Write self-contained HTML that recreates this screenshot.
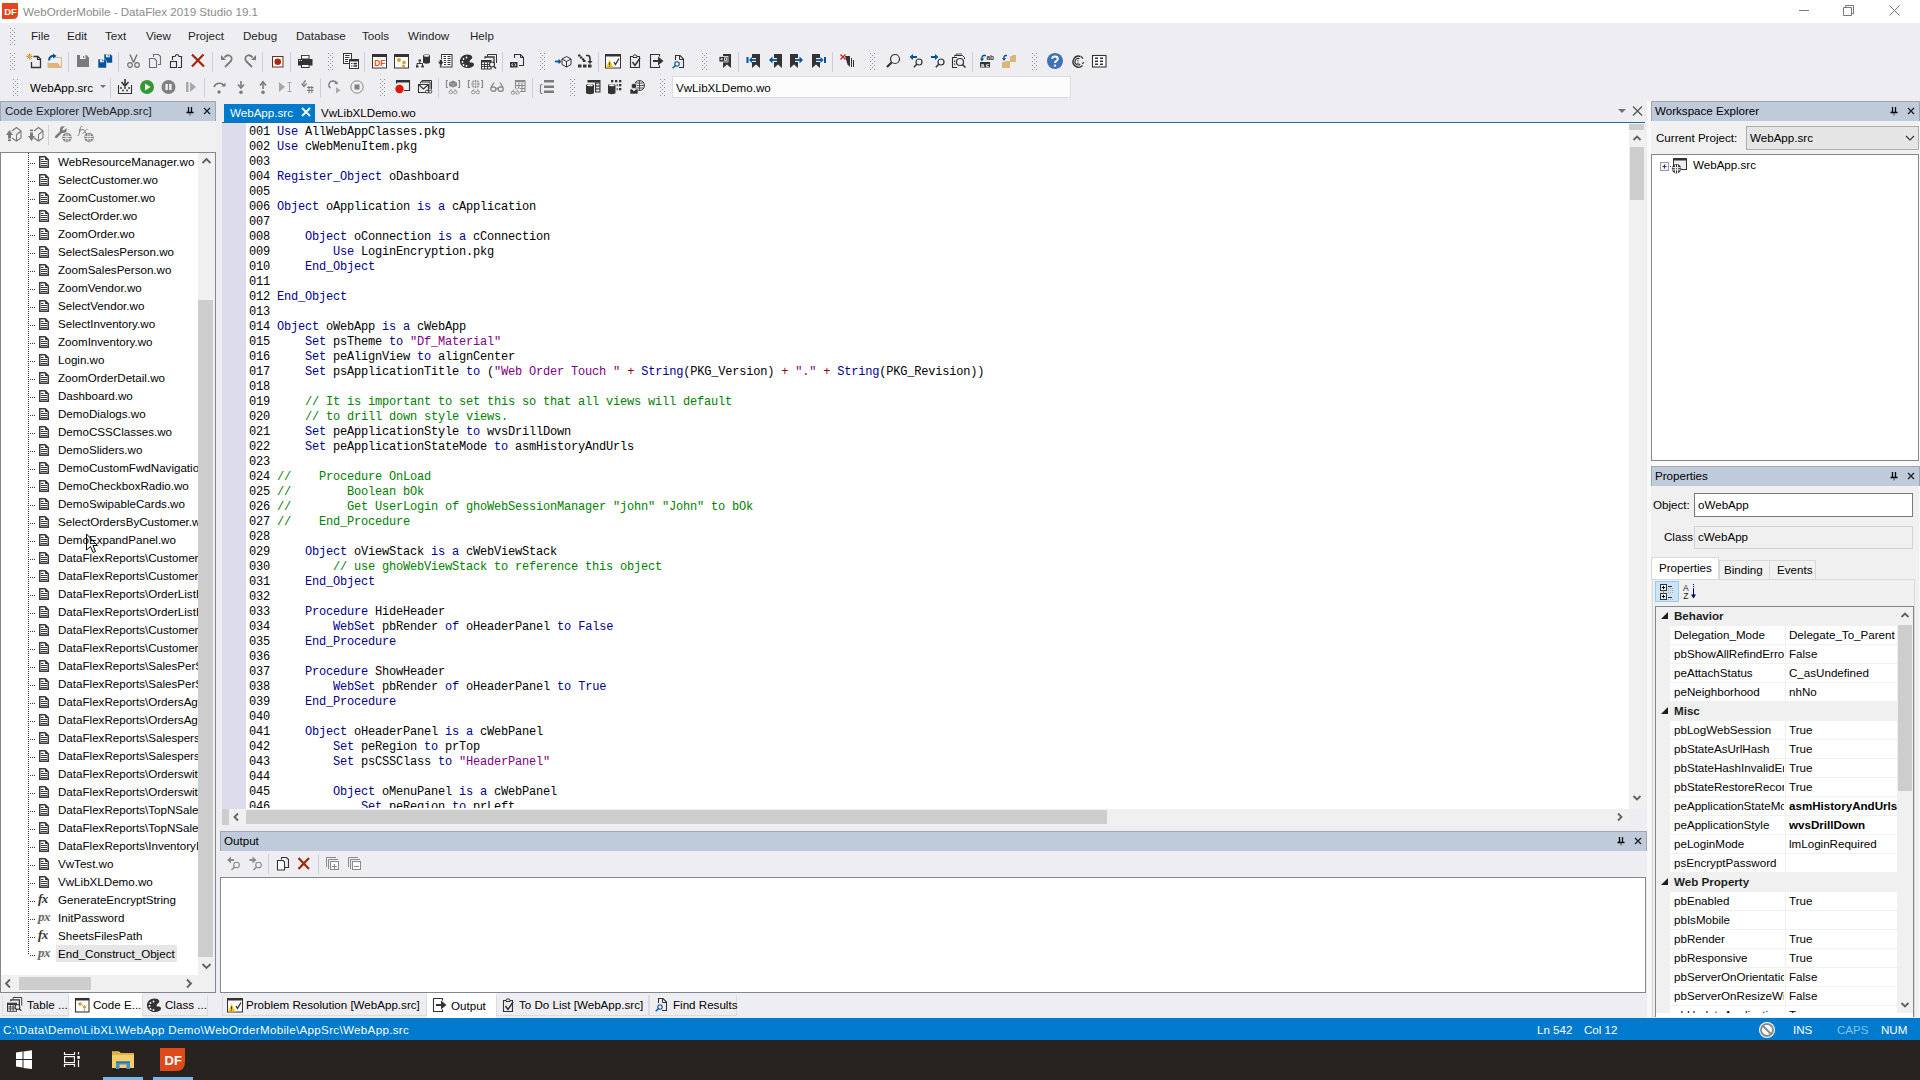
<!DOCTYPE html><html><head><meta charset="utf-8"><style>
*{margin:0;padding:0;box-sizing:border-box}
html,body{width:1920px;height:1080px;overflow:hidden;background:#eeeef2;font-family:"Liberation Sans",sans-serif;font-size:11.6px;color:#000}
div{position:absolute}
.t{white-space:nowrap;line-height:14px}
.code{font-family:"Liberation Mono",monospace;font-size:12px;letter-spacing:-0.2px;line-height:15px;white-space:pre;color:#000}
.k{color:#00008b}
.s{color:#800080}
.c{color:#008000}
.o{color:#8b0000}
.grip{background-image:radial-gradient(circle,#9a9aa0 0.8px,transparent 1px);background-size:4px 4px}
.sep{background:#cccedb}
</style></head><body>
<div style="left:0px;top:0px;width:1920px;height:23px;background:#fff"></div>
<svg style="position:absolute;left:2px;top:3px;" width="16" height="16" viewBox="0 0 16 16"><path d="M0 0H16V11Q16 16 11 16H0Z" fill="#e2461b"/><text x="2.2" y="11.8" font-family="Liberation Sans" font-weight="bold" font-size="9.5" fill="#fff">DF</text></svg>
<div class="t" style="left:23px;top:5px;color:#8b8b8b;font-size:11.6px">WebOrderMobile - DataFlex 2019 Studio 19.1</div>
<svg style="position:absolute;left:1799px;top:6px;" width="14" height="10" viewBox="0 0 14 10"><path d="M0 4.5H10" stroke="#777" stroke-width="1"/></svg>
<svg style="position:absolute;left:1843px;top:5px;" width="12" height="12" viewBox="0 0 12 12"><path d="M0.5 2.5H8.5V10.5H0.5Z M2.5 2.5V0.5H10.5V8.5H8.5" fill="none" stroke="#777" stroke-width="1"/></svg>
<svg style="position:absolute;left:1889px;top:5px;" width="12" height="12" viewBox="0 0 12 12"><path d="M0.5 0.5L10.5 10.5M10.5 0.5L0.5 10.5" stroke="#777" stroke-width="1"/></svg>
<div class="t" style="left:31px;top:29px;color:#1e1e1e">File</div>
<div class="t" style="left:67px;top:29px;color:#1e1e1e">Edit</div>
<div class="t" style="left:105px;top:29px;color:#1e1e1e">Text</div>
<div class="t" style="left:146px;top:29px;color:#1e1e1e">View</div>
<div class="t" style="left:188px;top:29px;color:#1e1e1e">Project</div>
<div class="t" style="left:243px;top:29px;color:#1e1e1e">Debug</div>
<div class="t" style="left:296px;top:29px;color:#1e1e1e">Database</div>
<div class="t" style="left:362px;top:29px;color:#1e1e1e">Tools</div>
<div class="t" style="left:408px;top:29px;color:#1e1e1e">Window</div>
<div class="t" style="left:470px;top:29px;color:#1e1e1e">Help</div>

<div class="t" style="left:30px;top:81px;">WebApp.src</div>
<div style="left:672px;top:76px;width:399px;height:22px;background:#fcfcfc;border:1px solid #dcdce0"></div>
<div class="t" style="left:676px;top:81px;">VwLibXLDemo.wo</div>
<div style="left:0px;top:121px;width:216px;height:872px;background:#f0f0f0"></div>
<div style="left:0px;top:101px;width:216px;height:20px;background:#bfcbda;border:1px solid #a2a6ab;border-bottom:none"></div>
<div class="t" style="left:5px;top:104px;color:#1e1e1e">Code Explorer [WebApp.src]</div>
<svg style="position:absolute;left:186px;top:106px;" width="8" height="10" viewBox="0 0 8 10"><path d="M2.5 1V6.5M5.5 1V6.5M0.5 6.5H7.5" stroke="#000" stroke-width="1.3" fill="none"/><path d="M4 7V9.5" stroke="#555" stroke-width="1.2"/></svg>
<svg style="position:absolute;left:203px;top:107px;" width="8" height="8" viewBox="0 0 8 8"><path d="M1 1L7 7M7 1L1 7" stroke="#1e1e1e" stroke-width="1.3"/></svg>
<div style="left:0px;top:152px;width:216px;height:841px;background:#fff;border:1px solid #828790"></div>
<div style="left:198px;top:153px;width:17px;height:822px;background:#f0f0f0"></div>
<div style="left:198px;top:300px;width:15px;height:657px;background:#cdcdcd"></div>
<svg style="position:absolute;left:201px;top:156px;" width="11" height="10" viewBox="0 0 11 10"><path d="M1.5 7L5.5 3L9.5 7" stroke="#606060" stroke-width="1.8" fill="none"/></svg>
<svg style="position:absolute;left:201px;top:961px;" width="11" height="10" viewBox="0 0 11 10"><path d="M1.5 3L5.5 7L9.5 3" stroke="#606060" stroke-width="1.8" fill="none"/></svg>
<div style="left:1px;top:975px;width:197px;height:17px;background:#f0f0f0"></div>
<div style="left:19px;top:977px;width:72px;height:13px;background:#cdcdcd"></div>
<svg style="position:absolute;left:3px;top:978px;" width="10" height="11" viewBox="0 0 10 11"><path d="M7 1.5L3 5.5L7 9.5" stroke="#606060" stroke-width="1.8" fill="none"/></svg>
<svg style="position:absolute;left:184px;top:978px;" width="10" height="11" viewBox="0 0 10 11"><path d="M3 1.5L7 5.5L3 9.5" stroke="#606060" stroke-width="1.8" fill="none"/></svg>
<div style="left:198px;top:975px;width:17px;height:17px;background:#f0f0f0"></div>
<div style="left:1px;top:153px;width:197px;height:822px;overflow:hidden"><div style="left:27px;top:0;width:1px;height:802px;background-image:linear-gradient(#333 50%,transparent 50%);background-size:1px 2px"></div><div style="left:29px;top:10px;width:6px;height:1px;background-image:linear-gradient(90deg,#333 50%,transparent 50%);background-size:2px 1px"></div><svg style="position:absolute;left:38px;top:3px" width="10" height="12" viewBox="0 0 10 12"><path d="M0.75 0.75H6.3L9.25 3.7V11.25H0.75Z" fill="#fff" stroke="#3a3a3a" stroke-width="1.5"/><path d="M6 0.5L9.5 4H6Z" fill="#3a3a3a"/><path d="M2 3.5H4.5M2 5.5H8M2 7.5H8M2 9.5H8" stroke="#3a3a3a" stroke-width="1"/></svg><div class="t" style="left:55px;top:2px;padding:0 2px">WebResourceManager.wo</div><div style="left:29px;top:28px;width:6px;height:1px;background-image:linear-gradient(90deg,#333 50%,transparent 50%);background-size:2px 1px"></div><svg style="position:absolute;left:38px;top:21px" width="10" height="12" viewBox="0 0 10 12"><path d="M0.75 0.75H6.3L9.25 3.7V11.25H0.75Z" fill="#fff" stroke="#3a3a3a" stroke-width="1.5"/><path d="M6 0.5L9.5 4H6Z" fill="#3a3a3a"/><path d="M2 3.5H4.5M2 5.5H8M2 7.5H8M2 9.5H8" stroke="#3a3a3a" stroke-width="1"/></svg><div class="t" style="left:55px;top:20px;padding:0 2px">SelectCustomer.wo</div><div style="left:29px;top:46px;width:6px;height:1px;background-image:linear-gradient(90deg,#333 50%,transparent 50%);background-size:2px 1px"></div><svg style="position:absolute;left:38px;top:39px" width="10" height="12" viewBox="0 0 10 12"><path d="M0.75 0.75H6.3L9.25 3.7V11.25H0.75Z" fill="#fff" stroke="#3a3a3a" stroke-width="1.5"/><path d="M6 0.5L9.5 4H6Z" fill="#3a3a3a"/><path d="M2 3.5H4.5M2 5.5H8M2 7.5H8M2 9.5H8" stroke="#3a3a3a" stroke-width="1"/></svg><div class="t" style="left:55px;top:38px;padding:0 2px">ZoomCustomer.wo</div><div style="left:29px;top:64px;width:6px;height:1px;background-image:linear-gradient(90deg,#333 50%,transparent 50%);background-size:2px 1px"></div><svg style="position:absolute;left:38px;top:57px" width="10" height="12" viewBox="0 0 10 12"><path d="M0.75 0.75H6.3L9.25 3.7V11.25H0.75Z" fill="#fff" stroke="#3a3a3a" stroke-width="1.5"/><path d="M6 0.5L9.5 4H6Z" fill="#3a3a3a"/><path d="M2 3.5H4.5M2 5.5H8M2 7.5H8M2 9.5H8" stroke="#3a3a3a" stroke-width="1"/></svg><div class="t" style="left:55px;top:56px;padding:0 2px">SelectOrder.wo</div><div style="left:29px;top:82px;width:6px;height:1px;background-image:linear-gradient(90deg,#333 50%,transparent 50%);background-size:2px 1px"></div><svg style="position:absolute;left:38px;top:75px" width="10" height="12" viewBox="0 0 10 12"><path d="M0.75 0.75H6.3L9.25 3.7V11.25H0.75Z" fill="#fff" stroke="#3a3a3a" stroke-width="1.5"/><path d="M6 0.5L9.5 4H6Z" fill="#3a3a3a"/><path d="M2 3.5H4.5M2 5.5H8M2 7.5H8M2 9.5H8" stroke="#3a3a3a" stroke-width="1"/></svg><div class="t" style="left:55px;top:74px;padding:0 2px">ZoomOrder.wo</div><div style="left:29px;top:100px;width:6px;height:1px;background-image:linear-gradient(90deg,#333 50%,transparent 50%);background-size:2px 1px"></div><svg style="position:absolute;left:38px;top:93px" width="10" height="12" viewBox="0 0 10 12"><path d="M0.75 0.75H6.3L9.25 3.7V11.25H0.75Z" fill="#fff" stroke="#3a3a3a" stroke-width="1.5"/><path d="M6 0.5L9.5 4H6Z" fill="#3a3a3a"/><path d="M2 3.5H4.5M2 5.5H8M2 7.5H8M2 9.5H8" stroke="#3a3a3a" stroke-width="1"/></svg><div class="t" style="left:55px;top:92px;padding:0 2px">SelectSalesPerson.wo</div><div style="left:29px;top:118px;width:6px;height:1px;background-image:linear-gradient(90deg,#333 50%,transparent 50%);background-size:2px 1px"></div><svg style="position:absolute;left:38px;top:111px" width="10" height="12" viewBox="0 0 10 12"><path d="M0.75 0.75H6.3L9.25 3.7V11.25H0.75Z" fill="#fff" stroke="#3a3a3a" stroke-width="1.5"/><path d="M6 0.5L9.5 4H6Z" fill="#3a3a3a"/><path d="M2 3.5H4.5M2 5.5H8M2 7.5H8M2 9.5H8" stroke="#3a3a3a" stroke-width="1"/></svg><div class="t" style="left:55px;top:110px;padding:0 2px">ZoomSalesPerson.wo</div><div style="left:29px;top:136px;width:6px;height:1px;background-image:linear-gradient(90deg,#333 50%,transparent 50%);background-size:2px 1px"></div><svg style="position:absolute;left:38px;top:129px" width="10" height="12" viewBox="0 0 10 12"><path d="M0.75 0.75H6.3L9.25 3.7V11.25H0.75Z" fill="#fff" stroke="#3a3a3a" stroke-width="1.5"/><path d="M6 0.5L9.5 4H6Z" fill="#3a3a3a"/><path d="M2 3.5H4.5M2 5.5H8M2 7.5H8M2 9.5H8" stroke="#3a3a3a" stroke-width="1"/></svg><div class="t" style="left:55px;top:128px;padding:0 2px">ZoomVendor.wo</div><div style="left:29px;top:154px;width:6px;height:1px;background-image:linear-gradient(90deg,#333 50%,transparent 50%);background-size:2px 1px"></div><svg style="position:absolute;left:38px;top:147px" width="10" height="12" viewBox="0 0 10 12"><path d="M0.75 0.75H6.3L9.25 3.7V11.25H0.75Z" fill="#fff" stroke="#3a3a3a" stroke-width="1.5"/><path d="M6 0.5L9.5 4H6Z" fill="#3a3a3a"/><path d="M2 3.5H4.5M2 5.5H8M2 7.5H8M2 9.5H8" stroke="#3a3a3a" stroke-width="1"/></svg><div class="t" style="left:55px;top:146px;padding:0 2px">SelectVendor.wo</div><div style="left:29px;top:172px;width:6px;height:1px;background-image:linear-gradient(90deg,#333 50%,transparent 50%);background-size:2px 1px"></div><svg style="position:absolute;left:38px;top:165px" width="10" height="12" viewBox="0 0 10 12"><path d="M0.75 0.75H6.3L9.25 3.7V11.25H0.75Z" fill="#fff" stroke="#3a3a3a" stroke-width="1.5"/><path d="M6 0.5L9.5 4H6Z" fill="#3a3a3a"/><path d="M2 3.5H4.5M2 5.5H8M2 7.5H8M2 9.5H8" stroke="#3a3a3a" stroke-width="1"/></svg><div class="t" style="left:55px;top:164px;padding:0 2px">SelectInventory.wo</div><div style="left:29px;top:190px;width:6px;height:1px;background-image:linear-gradient(90deg,#333 50%,transparent 50%);background-size:2px 1px"></div><svg style="position:absolute;left:38px;top:183px" width="10" height="12" viewBox="0 0 10 12"><path d="M0.75 0.75H6.3L9.25 3.7V11.25H0.75Z" fill="#fff" stroke="#3a3a3a" stroke-width="1.5"/><path d="M6 0.5L9.5 4H6Z" fill="#3a3a3a"/><path d="M2 3.5H4.5M2 5.5H8M2 7.5H8M2 9.5H8" stroke="#3a3a3a" stroke-width="1"/></svg><div class="t" style="left:55px;top:182px;padding:0 2px">ZoomInventory.wo</div><div style="left:29px;top:208px;width:6px;height:1px;background-image:linear-gradient(90deg,#333 50%,transparent 50%);background-size:2px 1px"></div><svg style="position:absolute;left:38px;top:201px" width="10" height="12" viewBox="0 0 10 12"><path d="M0.75 0.75H6.3L9.25 3.7V11.25H0.75Z" fill="#fff" stroke="#3a3a3a" stroke-width="1.5"/><path d="M6 0.5L9.5 4H6Z" fill="#3a3a3a"/><path d="M2 3.5H4.5M2 5.5H8M2 7.5H8M2 9.5H8" stroke="#3a3a3a" stroke-width="1"/></svg><div class="t" style="left:55px;top:200px;padding:0 2px">Login.wo</div><div style="left:29px;top:226px;width:6px;height:1px;background-image:linear-gradient(90deg,#333 50%,transparent 50%);background-size:2px 1px"></div><svg style="position:absolute;left:38px;top:219px" width="10" height="12" viewBox="0 0 10 12"><path d="M0.75 0.75H6.3L9.25 3.7V11.25H0.75Z" fill="#fff" stroke="#3a3a3a" stroke-width="1.5"/><path d="M6 0.5L9.5 4H6Z" fill="#3a3a3a"/><path d="M2 3.5H4.5M2 5.5H8M2 7.5H8M2 9.5H8" stroke="#3a3a3a" stroke-width="1"/></svg><div class="t" style="left:55px;top:218px;padding:0 2px">ZoomOrderDetail.wo</div><div style="left:29px;top:244px;width:6px;height:1px;background-image:linear-gradient(90deg,#333 50%,transparent 50%);background-size:2px 1px"></div><svg style="position:absolute;left:38px;top:237px" width="10" height="12" viewBox="0 0 10 12"><path d="M0.75 0.75H6.3L9.25 3.7V11.25H0.75Z" fill="#fff" stroke="#3a3a3a" stroke-width="1.5"/><path d="M6 0.5L9.5 4H6Z" fill="#3a3a3a"/><path d="M2 3.5H4.5M2 5.5H8M2 7.5H8M2 9.5H8" stroke="#3a3a3a" stroke-width="1"/></svg><div class="t" style="left:55px;top:236px;padding:0 2px">Dashboard.wo</div><div style="left:29px;top:262px;width:6px;height:1px;background-image:linear-gradient(90deg,#333 50%,transparent 50%);background-size:2px 1px"></div><svg style="position:absolute;left:38px;top:255px" width="10" height="12" viewBox="0 0 10 12"><path d="M0.75 0.75H6.3L9.25 3.7V11.25H0.75Z" fill="#fff" stroke="#3a3a3a" stroke-width="1.5"/><path d="M6 0.5L9.5 4H6Z" fill="#3a3a3a"/><path d="M2 3.5H4.5M2 5.5H8M2 7.5H8M2 9.5H8" stroke="#3a3a3a" stroke-width="1"/></svg><div class="t" style="left:55px;top:254px;padding:0 2px">DemoDialogs.wo</div><div style="left:29px;top:280px;width:6px;height:1px;background-image:linear-gradient(90deg,#333 50%,transparent 50%);background-size:2px 1px"></div><svg style="position:absolute;left:38px;top:273px" width="10" height="12" viewBox="0 0 10 12"><path d="M0.75 0.75H6.3L9.25 3.7V11.25H0.75Z" fill="#fff" stroke="#3a3a3a" stroke-width="1.5"/><path d="M6 0.5L9.5 4H6Z" fill="#3a3a3a"/><path d="M2 3.5H4.5M2 5.5H8M2 7.5H8M2 9.5H8" stroke="#3a3a3a" stroke-width="1"/></svg><div class="t" style="left:55px;top:272px;padding:0 2px">DemoCSSClasses.wo</div><div style="left:29px;top:298px;width:6px;height:1px;background-image:linear-gradient(90deg,#333 50%,transparent 50%);background-size:2px 1px"></div><svg style="position:absolute;left:38px;top:291px" width="10" height="12" viewBox="0 0 10 12"><path d="M0.75 0.75H6.3L9.25 3.7V11.25H0.75Z" fill="#fff" stroke="#3a3a3a" stroke-width="1.5"/><path d="M6 0.5L9.5 4H6Z" fill="#3a3a3a"/><path d="M2 3.5H4.5M2 5.5H8M2 7.5H8M2 9.5H8" stroke="#3a3a3a" stroke-width="1"/></svg><div class="t" style="left:55px;top:290px;padding:0 2px">DemoSliders.wo</div><div style="left:29px;top:316px;width:6px;height:1px;background-image:linear-gradient(90deg,#333 50%,transparent 50%);background-size:2px 1px"></div><svg style="position:absolute;left:38px;top:309px" width="10" height="12" viewBox="0 0 10 12"><path d="M0.75 0.75H6.3L9.25 3.7V11.25H0.75Z" fill="#fff" stroke="#3a3a3a" stroke-width="1.5"/><path d="M6 0.5L9.5 4H6Z" fill="#3a3a3a"/><path d="M2 3.5H4.5M2 5.5H8M2 7.5H8M2 9.5H8" stroke="#3a3a3a" stroke-width="1"/></svg><div class="t" style="left:55px;top:308px;padding:0 2px">DemoCustomFwdNavigation.wo</div><div style="left:29px;top:334px;width:6px;height:1px;background-image:linear-gradient(90deg,#333 50%,transparent 50%);background-size:2px 1px"></div><svg style="position:absolute;left:38px;top:327px" width="10" height="12" viewBox="0 0 10 12"><path d="M0.75 0.75H6.3L9.25 3.7V11.25H0.75Z" fill="#fff" stroke="#3a3a3a" stroke-width="1.5"/><path d="M6 0.5L9.5 4H6Z" fill="#3a3a3a"/><path d="M2 3.5H4.5M2 5.5H8M2 7.5H8M2 9.5H8" stroke="#3a3a3a" stroke-width="1"/></svg><div class="t" style="left:55px;top:326px;padding:0 2px">DemoCheckboxRadio.wo</div><div style="left:29px;top:352px;width:6px;height:1px;background-image:linear-gradient(90deg,#333 50%,transparent 50%);background-size:2px 1px"></div><svg style="position:absolute;left:38px;top:345px" width="10" height="12" viewBox="0 0 10 12"><path d="M0.75 0.75H6.3L9.25 3.7V11.25H0.75Z" fill="#fff" stroke="#3a3a3a" stroke-width="1.5"/><path d="M6 0.5L9.5 4H6Z" fill="#3a3a3a"/><path d="M2 3.5H4.5M2 5.5H8M2 7.5H8M2 9.5H8" stroke="#3a3a3a" stroke-width="1"/></svg><div class="t" style="left:55px;top:344px;padding:0 2px">DemoSwipableCards.wo</div><div style="left:29px;top:370px;width:6px;height:1px;background-image:linear-gradient(90deg,#333 50%,transparent 50%);background-size:2px 1px"></div><svg style="position:absolute;left:38px;top:363px" width="10" height="12" viewBox="0 0 10 12"><path d="M0.75 0.75H6.3L9.25 3.7V11.25H0.75Z" fill="#fff" stroke="#3a3a3a" stroke-width="1.5"/><path d="M6 0.5L9.5 4H6Z" fill="#3a3a3a"/><path d="M2 3.5H4.5M2 5.5H8M2 7.5H8M2 9.5H8" stroke="#3a3a3a" stroke-width="1"/></svg><div class="t" style="left:55px;top:362px;padding:0 2px">SelectOrdersByCustomer.wo</div><div style="left:29px;top:388px;width:6px;height:1px;background-image:linear-gradient(90deg,#333 50%,transparent 50%);background-size:2px 1px"></div><svg style="position:absolute;left:38px;top:381px" width="10" height="12" viewBox="0 0 10 12"><path d="M0.75 0.75H6.3L9.25 3.7V11.25H0.75Z" fill="#fff" stroke="#3a3a3a" stroke-width="1.5"/><path d="M6 0.5L9.5 4H6Z" fill="#3a3a3a"/><path d="M2 3.5H4.5M2 5.5H8M2 7.5H8M2 9.5H8" stroke="#3a3a3a" stroke-width="1"/></svg><div class="t" style="left:55px;top:380px;padding:0 2px">DemoExpandPanel.wo</div><div style="left:29px;top:406px;width:6px;height:1px;background-image:linear-gradient(90deg,#333 50%,transparent 50%);background-size:2px 1px"></div><svg style="position:absolute;left:38px;top:399px" width="10" height="12" viewBox="0 0 10 12"><path d="M0.75 0.75H6.3L9.25 3.7V11.25H0.75Z" fill="#fff" stroke="#3a3a3a" stroke-width="1.5"/><path d="M6 0.5L9.5 4H6Z" fill="#3a3a3a"/><path d="M2 3.5H4.5M2 5.5H8M2 7.5H8M2 9.5H8" stroke="#3a3a3a" stroke-width="1"/></svg><div class="t" style="left:55px;top:398px;padding:0 2px">DataFlexReports\CustomerList.wo</div><div style="left:29px;top:424px;width:6px;height:1px;background-image:linear-gradient(90deg,#333 50%,transparent 50%);background-size:2px 1px"></div><svg style="position:absolute;left:38px;top:417px" width="10" height="12" viewBox="0 0 10 12"><path d="M0.75 0.75H6.3L9.25 3.7V11.25H0.75Z" fill="#fff" stroke="#3a3a3a" stroke-width="1.5"/><path d="M6 0.5L9.5 4H6Z" fill="#3a3a3a"/><path d="M2 3.5H4.5M2 5.5H8M2 7.5H8M2 9.5H8" stroke="#3a3a3a" stroke-width="1"/></svg><div class="t" style="left:55px;top:416px;padding:0 2px">DataFlexReports\CustomerList2.wo</div><div style="left:29px;top:442px;width:6px;height:1px;background-image:linear-gradient(90deg,#333 50%,transparent 50%);background-size:2px 1px"></div><svg style="position:absolute;left:38px;top:435px" width="10" height="12" viewBox="0 0 10 12"><path d="M0.75 0.75H6.3L9.25 3.7V11.25H0.75Z" fill="#fff" stroke="#3a3a3a" stroke-width="1.5"/><path d="M6 0.5L9.5 4H6Z" fill="#3a3a3a"/><path d="M2 3.5H4.5M2 5.5H8M2 7.5H8M2 9.5H8" stroke="#3a3a3a" stroke-width="1"/></svg><div class="t" style="left:55px;top:434px;padding:0 2px">DataFlexReports\OrderListByCustomer.wo</div><div style="left:29px;top:460px;width:6px;height:1px;background-image:linear-gradient(90deg,#333 50%,transparent 50%);background-size:2px 1px"></div><svg style="position:absolute;left:38px;top:453px" width="10" height="12" viewBox="0 0 10 12"><path d="M0.75 0.75H6.3L9.25 3.7V11.25H0.75Z" fill="#fff" stroke="#3a3a3a" stroke-width="1.5"/><path d="M6 0.5L9.5 4H6Z" fill="#3a3a3a"/><path d="M2 3.5H4.5M2 5.5H8M2 7.5H8M2 9.5H8" stroke="#3a3a3a" stroke-width="1"/></svg><div class="t" style="left:55px;top:452px;padding:0 2px">DataFlexReports\OrderListByDate.wo</div><div style="left:29px;top:478px;width:6px;height:1px;background-image:linear-gradient(90deg,#333 50%,transparent 50%);background-size:2px 1px"></div><svg style="position:absolute;left:38px;top:471px" width="10" height="12" viewBox="0 0 10 12"><path d="M0.75 0.75H6.3L9.25 3.7V11.25H0.75Z" fill="#fff" stroke="#3a3a3a" stroke-width="1.5"/><path d="M6 0.5L9.5 4H6Z" fill="#3a3a3a"/><path d="M2 3.5H4.5M2 5.5H8M2 7.5H8M2 9.5H8" stroke="#3a3a3a" stroke-width="1"/></svg><div class="t" style="left:55px;top:470px;padding:0 2px">DataFlexReports\CustomerLabels.wo</div><div style="left:29px;top:496px;width:6px;height:1px;background-image:linear-gradient(90deg,#333 50%,transparent 50%);background-size:2px 1px"></div><svg style="position:absolute;left:38px;top:489px" width="10" height="12" viewBox="0 0 10 12"><path d="M0.75 0.75H6.3L9.25 3.7V11.25H0.75Z" fill="#fff" stroke="#3a3a3a" stroke-width="1.5"/><path d="M6 0.5L9.5 4H6Z" fill="#3a3a3a"/><path d="M2 3.5H4.5M2 5.5H8M2 7.5H8M2 9.5H8" stroke="#3a3a3a" stroke-width="1"/></svg><div class="t" style="left:55px;top:488px;padding:0 2px">DataFlexReports\CustomerCards.wo</div><div style="left:29px;top:514px;width:6px;height:1px;background-image:linear-gradient(90deg,#333 50%,transparent 50%);background-size:2px 1px"></div><svg style="position:absolute;left:38px;top:507px" width="10" height="12" viewBox="0 0 10 12"><path d="M0.75 0.75H6.3L9.25 3.7V11.25H0.75Z" fill="#fff" stroke="#3a3a3a" stroke-width="1.5"/><path d="M6 0.5L9.5 4H6Z" fill="#3a3a3a"/><path d="M2 3.5H4.5M2 5.5H8M2 7.5H8M2 9.5H8" stroke="#3a3a3a" stroke-width="1"/></svg><div class="t" style="left:55px;top:506px;padding:0 2px">DataFlexReports\SalesPerSalesPerson.wo</div><div style="left:29px;top:532px;width:6px;height:1px;background-image:linear-gradient(90deg,#333 50%,transparent 50%);background-size:2px 1px"></div><svg style="position:absolute;left:38px;top:525px" width="10" height="12" viewBox="0 0 10 12"><path d="M0.75 0.75H6.3L9.25 3.7V11.25H0.75Z" fill="#fff" stroke="#3a3a3a" stroke-width="1.5"/><path d="M6 0.5L9.5 4H6Z" fill="#3a3a3a"/><path d="M2 3.5H4.5M2 5.5H8M2 7.5H8M2 9.5H8" stroke="#3a3a3a" stroke-width="1"/></svg><div class="t" style="left:55px;top:524px;padding:0 2px">DataFlexReports\SalesPerState.wo</div><div style="left:29px;top:550px;width:6px;height:1px;background-image:linear-gradient(90deg,#333 50%,transparent 50%);background-size:2px 1px"></div><svg style="position:absolute;left:38px;top:543px" width="10" height="12" viewBox="0 0 10 12"><path d="M0.75 0.75H6.3L9.25 3.7V11.25H0.75Z" fill="#fff" stroke="#3a3a3a" stroke-width="1.5"/><path d="M6 0.5L9.5 4H6Z" fill="#3a3a3a"/><path d="M2 3.5H4.5M2 5.5H8M2 7.5H8M2 9.5H8" stroke="#3a3a3a" stroke-width="1"/></svg><div class="t" style="left:55px;top:542px;padding:0 2px">DataFlexReports\OrdersAging.wo</div><div style="left:29px;top:568px;width:6px;height:1px;background-image:linear-gradient(90deg,#333 50%,transparent 50%);background-size:2px 1px"></div><svg style="position:absolute;left:38px;top:561px" width="10" height="12" viewBox="0 0 10 12"><path d="M0.75 0.75H6.3L9.25 3.7V11.25H0.75Z" fill="#fff" stroke="#3a3a3a" stroke-width="1.5"/><path d="M6 0.5L9.5 4H6Z" fill="#3a3a3a"/><path d="M2 3.5H4.5M2 5.5H8M2 7.5H8M2 9.5H8" stroke="#3a3a3a" stroke-width="1"/></svg><div class="t" style="left:55px;top:560px;padding:0 2px">DataFlexReports\OrdersAgingChart.wo</div><div style="left:29px;top:586px;width:6px;height:1px;background-image:linear-gradient(90deg,#333 50%,transparent 50%);background-size:2px 1px"></div><svg style="position:absolute;left:38px;top:579px" width="10" height="12" viewBox="0 0 10 12"><path d="M0.75 0.75H6.3L9.25 3.7V11.25H0.75Z" fill="#fff" stroke="#3a3a3a" stroke-width="1.5"/><path d="M6 0.5L9.5 4H6Z" fill="#3a3a3a"/><path d="M2 3.5H4.5M2 5.5H8M2 7.5H8M2 9.5H8" stroke="#3a3a3a" stroke-width="1"/></svg><div class="t" style="left:55px;top:578px;padding:0 2px">DataFlexReports\SalespersonSales.wo</div><div style="left:29px;top:604px;width:6px;height:1px;background-image:linear-gradient(90deg,#333 50%,transparent 50%);background-size:2px 1px"></div><svg style="position:absolute;left:38px;top:597px" width="10" height="12" viewBox="0 0 10 12"><path d="M0.75 0.75H6.3L9.25 3.7V11.25H0.75Z" fill="#fff" stroke="#3a3a3a" stroke-width="1.5"/><path d="M6 0.5L9.5 4H6Z" fill="#3a3a3a"/><path d="M2 3.5H4.5M2 5.5H8M2 7.5H8M2 9.5H8" stroke="#3a3a3a" stroke-width="1"/></svg><div class="t" style="left:55px;top:596px;padding:0 2px">DataFlexReports\SalespersonChart.wo</div><div style="left:29px;top:622px;width:6px;height:1px;background-image:linear-gradient(90deg,#333 50%,transparent 50%);background-size:2px 1px"></div><svg style="position:absolute;left:38px;top:615px" width="10" height="12" viewBox="0 0 10 12"><path d="M0.75 0.75H6.3L9.25 3.7V11.25H0.75Z" fill="#fff" stroke="#3a3a3a" stroke-width="1.5"/><path d="M6 0.5L9.5 4H6Z" fill="#3a3a3a"/><path d="M2 3.5H4.5M2 5.5H8M2 7.5H8M2 9.5H8" stroke="#3a3a3a" stroke-width="1"/></svg><div class="t" style="left:55px;top:614px;padding:0 2px">DataFlexReports\OrderswithTotals.wo</div><div style="left:29px;top:640px;width:6px;height:1px;background-image:linear-gradient(90deg,#333 50%,transparent 50%);background-size:2px 1px"></div><svg style="position:absolute;left:38px;top:633px" width="10" height="12" viewBox="0 0 10 12"><path d="M0.75 0.75H6.3L9.25 3.7V11.25H0.75Z" fill="#fff" stroke="#3a3a3a" stroke-width="1.5"/><path d="M6 0.5L9.5 4H6Z" fill="#3a3a3a"/><path d="M2 3.5H4.5M2 5.5H8M2 7.5H8M2 9.5H8" stroke="#3a3a3a" stroke-width="1"/></svg><div class="t" style="left:55px;top:632px;padding:0 2px">DataFlexReports\OrderswithDetails.wo</div><div style="left:29px;top:658px;width:6px;height:1px;background-image:linear-gradient(90deg,#333 50%,transparent 50%);background-size:2px 1px"></div><svg style="position:absolute;left:38px;top:651px" width="10" height="12" viewBox="0 0 10 12"><path d="M0.75 0.75H6.3L9.25 3.7V11.25H0.75Z" fill="#fff" stroke="#3a3a3a" stroke-width="1.5"/><path d="M6 0.5L9.5 4H6Z" fill="#3a3a3a"/><path d="M2 3.5H4.5M2 5.5H8M2 7.5H8M2 9.5H8" stroke="#3a3a3a" stroke-width="1"/></svg><div class="t" style="left:55px;top:650px;padding:0 2px">DataFlexReports\TopNSales.wo</div><div style="left:29px;top:676px;width:6px;height:1px;background-image:linear-gradient(90deg,#333 50%,transparent 50%);background-size:2px 1px"></div><svg style="position:absolute;left:38px;top:669px" width="10" height="12" viewBox="0 0 10 12"><path d="M0.75 0.75H6.3L9.25 3.7V11.25H0.75Z" fill="#fff" stroke="#3a3a3a" stroke-width="1.5"/><path d="M6 0.5L9.5 4H6Z" fill="#3a3a3a"/><path d="M2 3.5H4.5M2 5.5H8M2 7.5H8M2 9.5H8" stroke="#3a3a3a" stroke-width="1"/></svg><div class="t" style="left:55px;top:668px;padding:0 2px">DataFlexReports\TopNSalesChart.wo</div><div style="left:29px;top:694px;width:6px;height:1px;background-image:linear-gradient(90deg,#333 50%,transparent 50%);background-size:2px 1px"></div><svg style="position:absolute;left:38px;top:687px" width="10" height="12" viewBox="0 0 10 12"><path d="M0.75 0.75H6.3L9.25 3.7V11.25H0.75Z" fill="#fff" stroke="#3a3a3a" stroke-width="1.5"/><path d="M6 0.5L9.5 4H6Z" fill="#3a3a3a"/><path d="M2 3.5H4.5M2 5.5H8M2 7.5H8M2 9.5H8" stroke="#3a3a3a" stroke-width="1"/></svg><div class="t" style="left:55px;top:686px;padding:0 2px">DataFlexReports\InventoryList.wo</div><div style="left:29px;top:712px;width:6px;height:1px;background-image:linear-gradient(90deg,#333 50%,transparent 50%);background-size:2px 1px"></div><svg style="position:absolute;left:38px;top:705px" width="10" height="12" viewBox="0 0 10 12"><path d="M0.75 0.75H6.3L9.25 3.7V11.25H0.75Z" fill="#fff" stroke="#3a3a3a" stroke-width="1.5"/><path d="M6 0.5L9.5 4H6Z" fill="#3a3a3a"/><path d="M2 3.5H4.5M2 5.5H8M2 7.5H8M2 9.5H8" stroke="#3a3a3a" stroke-width="1"/></svg><div class="t" style="left:55px;top:704px;padding:0 2px">VwTest.wo</div><div style="left:29px;top:730px;width:6px;height:1px;background-image:linear-gradient(90deg,#333 50%,transparent 50%);background-size:2px 1px"></div><svg style="position:absolute;left:38px;top:723px" width="10" height="12" viewBox="0 0 10 12"><path d="M0.75 0.75H6.3L9.25 3.7V11.25H0.75Z" fill="#fff" stroke="#3a3a3a" stroke-width="1.5"/><path d="M6 0.5L9.5 4H6Z" fill="#3a3a3a"/><path d="M2 3.5H4.5M2 5.5H8M2 7.5H8M2 9.5H8" stroke="#3a3a3a" stroke-width="1"/></svg><div class="t" style="left:55px;top:722px;padding:0 2px">VwLibXLDemo.wo</div><div style="left:29px;top:748px;width:6px;height:1px;background-image:linear-gradient(90deg,#333 50%,transparent 50%);background-size:2px 1px"></div><div class="t" style="left:37px;top:739px;font-family:'Liberation Serif',serif;font-style:italic;font-weight:bold;font-size:13px;color:#333;letter-spacing:-0.5px">fx</div><div class="t" style="left:55px;top:740px;padding:0 2px">GenerateEncryptString</div><div style="left:29px;top:766px;width:6px;height:1px;background-image:linear-gradient(90deg,#333 50%,transparent 50%);background-size:2px 1px"></div><div class="t" style="left:37px;top:757px;font-family:'Liberation Serif',serif;font-style:italic;font-weight:bold;font-size:13px;color:#666;letter-spacing:-0.5px">px</div><div class="t" style="left:55px;top:758px;padding:0 2px">InitPassword</div><div style="left:29px;top:784px;width:6px;height:1px;background-image:linear-gradient(90deg,#333 50%,transparent 50%);background-size:2px 1px"></div><div class="t" style="left:37px;top:775px;font-family:'Liberation Serif',serif;font-style:italic;font-weight:bold;font-size:13px;color:#333;letter-spacing:-0.5px">fx</div><div class="t" style="left:55px;top:776px;padding:0 2px">SheetsFilesPath</div><div style="left:29px;top:802px;width:6px;height:1px;background-image:linear-gradient(90deg,#333 50%,transparent 50%);background-size:2px 1px"></div><div class="t" style="left:37px;top:793px;font-family:'Liberation Serif',serif;font-style:italic;font-weight:bold;font-size:13px;color:#666;letter-spacing:-0.5px">px</div><div class="t" style="left:55px;top:792px;padding:2px 2px 1px;background:#e6e6e6">End_Construct_Object</div></div>

<div style="left:2px;top:995px;width:67px;height:21px;background:#eeeef2;border:1px solid #dadadf;border-top:none"></div>
<div style="left:69px;top:993px;width:73px;height:25px;background:#fff"></div>
<div style="left:142px;top:995px;width:66px;height:21px;background:#eeeef2;border:1px solid #dadadf;border-top:none"></div>
<div class="t" style="left:27px;top:998px;">Table ...</div>
<div class="t" style="left:93px;top:998px;">Code E...</div>
<div class="t" style="left:165px;top:998px;">Class ...</div>

<div style="left:224px;top:104px;width:91px;height:18px;background:#007acc"></div>
<div class="t" style="left:230px;top:106px;color:#fff">WebApp.src</div>
<svg style="position:absolute;left:301px;top:107px;" width="10" height="10" viewBox="0 0 10 10"><path d="M1 1L9 9M9 1L1 9" stroke="#fff" stroke-width="1.8"/></svg>
<div class="t" style="left:321px;top:106px;">VwLibXLDemo.wo</div>
<div style="left:222px;top:122px;width:1423px;height:1px;background:#1f6e9e"></div>
<svg style="position:absolute;left:1617px;top:107px;" width="10" height="8" viewBox="0 0 10 8"><path d="M1 2H9L5 6Z" fill="#717171"/></svg>
<svg style="position:absolute;left:1632px;top:106px;" width="11" height="10" viewBox="0 0 11 10"><path d="M1 0.5L10 9.5M10 0.5L1 9.5" stroke="#555" stroke-width="1.3"/></svg>
<div style="left:222px;top:123px;width:1423px;height:686px;background:#fff"></div>
<div style="left:222px;top:123px;width:24px;height:686px;background:#dcdcec"></div>
<div class="code" style="left:249px;top:125px;width:1380px;height:683px;overflow:hidden">001 <span class="k">Use</span> AllWebAppClasses.pkg
002 <span class="k">Use</span> cWebMenuItem.pkg
003 
004 <span class="k">Register_Object</span> oDashboard
005 
006 <span class="k">Object</span> oApplication <span class="k">is</span> <span class="k">a</span> cApplication
007 
008     <span class="k">Object</span> oConnection <span class="k">is</span> <span class="k">a</span> cConnection
009         <span class="k">Use</span> LoginEncryption.pkg
010     <span class="k">End_Object</span>
011 
012 <span class="k">End_Object</span>
013 
014 <span class="k">Object</span> oWebApp <span class="k">is</span> <span class="k">a</span> cWebApp
015     <span class="k">Set</span> psTheme <span class="k">to</span> <span class="s">&quot;Df_Material&quot;</span>
016     <span class="k">Set</span> peAlignView <span class="k">to</span> alignCenter
017     <span class="k">Set</span> psApplicationTitle <span class="k">to</span> (<span class="s">&quot;Web Order Touch &quot;</span> <span class="o">+</span> <span class="k">String</span>(PKG_Version) <span class="o">+</span> <span class="s">&quot;.&quot;</span> <span class="o">+</span> <span class="k">String</span>(PKG_Revision))
018 
019     <span class="c">// It is important to set this so that all views will default</span>
020     <span class="c">// to drill down style views.</span>
021     <span class="k">Set</span> peApplicationStyle <span class="k">to</span> wvsDrillDown
022     <span class="k">Set</span> peApplicationStateMode <span class="k">to</span> asmHistoryAndUrls
023 
024 <span class="c">//    Procedure OnLoad</span>
025 <span class="c">//        Boolean bOk</span>
026 <span class="c">//        Get UserLogin of ghoWebSessionManager &quot;john&quot; &quot;John&quot; to bOk</span>
027 <span class="c">//    End_Procedure</span>
028 
029     <span class="k">Object</span> oViewStack <span class="k">is</span> <span class="k">a</span> cWebViewStack
030         <span class="c">// use ghoWebViewStack to reference this object</span>
031     <span class="k">End_Object</span>
032 
033     <span class="k">Procedure</span> HideHeader
034         <span class="k">WebSet</span> pbRender <span class="k">of</span> oHeaderPanel <span class="k">to</span> <span class="k">False</span>
035     <span class="k">End_Procedure</span>
036 
037     <span class="k">Procedure</span> ShowHeader
038         <span class="k">WebSet</span> pbRender <span class="k">of</span> oHeaderPanel <span class="k">to</span> <span class="k">True</span>
039     <span class="k">End_Procedure</span>
040 
041     <span class="k">Object</span> oHeaderPanel <span class="k">is</span> <span class="k">a</span> cWebPanel
042         <span class="k">Set</span> peRegion <span class="k">to</span> prTop
043         <span class="k">Set</span> psCSSClass <span class="k">to</span> <span class="s">&quot;HeaderPanel&quot;</span>
044 
045         <span class="k">Object</span> oMenuPanel <span class="k">is</span> <span class="k">a</span> cWebPanel
046             <span class="k">Set</span> peRegion <span class="k">to</span> prLeft</div>
<div style="left:1629px;top:123px;width:16px;height:686px;background:#f0f0f0"></div>
<div style="left:1629px;top:124px;width:15px;height:6px;background:#cdcdcd"></div>
<svg style="position:absolute;left:1632px;top:134px;" width="10" height="8" viewBox="0 0 10 8"><path d="M1.5 6L5 2.5L8.5 6" stroke="#606060" stroke-width="1.8" fill="none"/></svg>
<div style="left:1630px;top:147px;width:14px;height:53px;background:#cdcdcd"></div>
<svg style="position:absolute;left:1632px;top:794px;" width="10" height="8" viewBox="0 0 10 8"><path d="M1.5 2L5 5.5L8.5 2" stroke="#606060" stroke-width="1.8" fill="none"/></svg>
<div style="left:222px;top:809px;width:1407px;height:16px;background:#f0f0f0"></div>
<div style="left:222px;top:809px;width:7px;height:16px;background:#cdcdcd"></div>
<svg style="position:absolute;left:232px;top:812px;" width="8" height="10" viewBox="0 0 8 10"><path d="M6 1.5L2.5 5L6 8.5" stroke="#606060" stroke-width="1.8" fill="none"/></svg>
<div style="left:246px;top:810px;width:861px;height:14px;background:#cdcdcd"></div>
<svg style="position:absolute;left:1616px;top:812px;" width="8" height="10" viewBox="0 0 8 10"><path d="M2 1.5L5.5 5L2 8.5" stroke="#606060" stroke-width="1.8" fill="none"/></svg>
<div style="left:220px;top:831px;width:1427px;height:20px;background:#bfcbda;border:1px solid #a2a6ab;border-bottom:none"></div>
<div class="t" style="left:224px;top:834px;">Output</div>
<svg style="position:absolute;left:1617px;top:836px;" width="8" height="10" viewBox="0 0 8 10"><path d="M2.5 1V6.5M5.5 1V6.5M0.5 6.5H7.5" stroke="#000" stroke-width="1.3" fill="none"/><path d="M4 7V9.5" stroke="#555" stroke-width="1.2"/></svg>
<svg style="position:absolute;left:1634px;top:837px;" width="8" height="8" viewBox="0 0 8 8"><path d="M1 1L7 7M7 1L1 7" stroke="#1e1e1e" stroke-width="1.3"/></svg>

<div style="left:220px;top:877px;width:1426px;height:116px;background:#fff;border:1px solid #828790"></div>

<div style="left:222px;top:995px;width:205px;height:21px;background:#eeeef2;border:1px solid #dadadf;border-top:none"></div>
<div style="left:427px;top:993px;width:69px;height:25px;background:#fff"></div>
<div style="left:496px;top:995px;width:153px;height:21px;background:#eeeef2;border:1px solid #dadadf;border-top:none"></div>
<div style="left:649px;top:995px;width:88px;height:21px;background:#eeeef2;border:1px solid #dadadf;border-top:none"></div>
<div class="t" style="left:246px;top:998px;">Problem Resolution [WebApp.src]</div>
<div class="t" style="left:451px;top:999px;">Output</div>
<div class="t" style="left:519px;top:998px;">To Do List [WebApp.src]</div>
<div class="t" style="left:673px;top:998px;">Find Results</div>
<div style="left:1647px;top:101px;width:273px;height:916px;background:#f9f9f9"></div>
<div style="left:1651px;top:121px;width:268px;height:340px;background:#f0f0f0"></div>
<div style="left:1651px;top:486px;width:268px;height:531px;background:#f0f0f0"></div>
<div style="left:1651px;top:101px;width:269px;height:20px;background:#bfcbda;border:1px solid #a2a6ab;border-bottom:none"></div>
<div class="t" style="left:1655px;top:104px;">Workspace Explorer</div>
<svg style="position:absolute;left:1890px;top:106px;" width="8" height="10" viewBox="0 0 8 10"><path d="M2.5 1V6.5M5.5 1V6.5M0.5 6.5H7.5" stroke="#000" stroke-width="1.3" fill="none"/><path d="M4 7V9.5" stroke="#555" stroke-width="1.2"/></svg>
<svg style="position:absolute;left:1907px;top:107px;" width="8" height="8" viewBox="0 0 8 8"><path d="M1 1L7 7M7 1L1 7" stroke="#1e1e1e" stroke-width="1.3"/></svg>
<div class="t" style="left:1656px;top:131px;">Current Project:</div>
<div style="left:1746px;top:126px;width:173px;height:24px;background:#e5e5e5;border:1px solid #adadad"></div>
<div class="t" style="left:1750px;top:131px;">WebApp.src</div>
<svg style="position:absolute;left:1905px;top:135px;" width="10" height="7" viewBox="0 0 10 7"><path d="M1 1L5 5L9 1" stroke="#333" stroke-width="1.1" fill="none"/></svg>
<div style="left:1651px;top:154px;width:268px;height:307px;background:#fff;border:1px solid #828790"></div>

<div class="t" style="left:1693px;top:158px;">WebApp.src</div>
<div style="left:1651px;top:466px;width:269px;height:20px;background:#bfcbda;border:1px solid #a2a6ab;border-bottom:none"></div>
<div class="t" style="left:1655px;top:469px;">Properties</div>
<svg style="position:absolute;left:1890px;top:471px;" width="8" height="10" viewBox="0 0 8 10"><path d="M2.5 1V6.5M5.5 1V6.5M0.5 6.5H7.5" stroke="#000" stroke-width="1.3" fill="none"/><path d="M4 7V9.5" stroke="#555" stroke-width="1.2"/></svg>
<svg style="position:absolute;left:1907px;top:472px;" width="8" height="8" viewBox="0 0 8 8"><path d="M1 1L7 7M7 1L1 7" stroke="#1e1e1e" stroke-width="1.3"/></svg>
<div class="t" style="left:1653px;top:498px;">Object:</div>
<div style="left:1694px;top:493px;width:219px;height:24px;background:#fff;border:1px solid #7a7a7a"></div>
<div class="t" style="left:1698px;top:498px;">oWebApp</div>
<div class="t" style="left:1664px;top:530px;">Class</div>
<div style="left:1694px;top:526px;width:219px;height:23px;background:#f0f0f0;border:1px solid #d2d2d2"></div>
<div class="t" style="left:1698px;top:530px;">cWebApp</div>
<div style="left:1651px;top:557px;width:68px;height:23px;background:#fff;border:1px solid #d9d9d9;border-bottom:none"></div>
<div style="left:1719px;top:560px;width:51px;height:20px;background:#f0f0f0;border:1px solid #d9d9d9;border-bottom:none"></div>
<div style="left:1769px;top:560px;width:47px;height:20px;background:#f0f0f0;border:1px solid #d9d9d9;border-bottom:none"></div>
<div class="t" style="left:1659px;top:561px;">Properties</div>
<div class="t" style="left:1724px;top:563px;">Binding</div>
<div class="t" style="left:1777px;top:563px;">Events</div>
<div style="left:1652px;top:579px;width:263px;height:438px;background:#f0f0f0;border:1px solid #d9d9d9"></div>
<div style="left:1655px;top:581px;width:24px;height:21px;background:#cce4f7;border:1px solid #99c9ef"></div>

<div style="left:1655px;top:606px;width:259px;height:411px;background:#fff;border:1px solid #828790;border-bottom:none"></div>
<div style="left:1656px;top:607px;width:241px;height:406px;overflow:hidden;background:#f0f0f0"><div style="left:0;top:0px;width:241px;height:19px;background:#f0f0f0"></div><svg style="position:absolute;left:5px;top:5px" width="8" height="8"><path d="M7 0V7H0Z" fill="#1e1e1e"/></svg><div class="t" style="left:18px;top:2px;font-weight:bold;color:#1e1e1e">Behavior</div><div style="left:14px;top:19px;width:227px;height:19px;background:#fff;border-bottom:1px solid #f0f0f0"></div><div style="left:129px;top:19px;width:1px;height:19px;background:#f0f0f0"></div><div class="t" style="left:18px;top:21px;width:110px;overflow:hidden">Delegation_Mode</div><div class="t" style="left:133px;top:21px;width:108px;overflow:hidden;">Delegate_To_Parent</div><div style="left:14px;top:38px;width:227px;height:19px;background:#fff;border-bottom:1px solid #f0f0f0"></div><div style="left:129px;top:38px;width:1px;height:19px;background:#f0f0f0"></div><div class="t" style="left:18px;top:40px;width:110px;overflow:hidden">pbShowAllRefindErrors</div><div class="t" style="left:133px;top:40px;width:108px;overflow:hidden;">False</div><div style="left:14px;top:57px;width:227px;height:19px;background:#fff;border-bottom:1px solid #f0f0f0"></div><div style="left:129px;top:57px;width:1px;height:19px;background:#f0f0f0"></div><div class="t" style="left:18px;top:59px;width:110px;overflow:hidden">peAttachStatus</div><div class="t" style="left:133px;top:59px;width:108px;overflow:hidden;">C_asUndefined</div><div style="left:14px;top:76px;width:227px;height:19px;background:#fff;border-bottom:1px solid #f0f0f0"></div><div style="left:129px;top:76px;width:1px;height:19px;background:#f0f0f0"></div><div class="t" style="left:18px;top:78px;width:110px;overflow:hidden">peNeighborhood</div><div class="t" style="left:133px;top:78px;width:108px;overflow:hidden;">nhNo</div><div style="left:0;top:95px;width:241px;height:19px;background:#f0f0f0"></div><svg style="position:absolute;left:5px;top:100px" width="8" height="8"><path d="M7 0V7H0Z" fill="#1e1e1e"/></svg><div class="t" style="left:18px;top:97px;font-weight:bold;color:#1e1e1e">Misc</div><div style="left:14px;top:114px;width:227px;height:19px;background:#fff;border-bottom:1px solid #f0f0f0"></div><div style="left:129px;top:114px;width:1px;height:19px;background:#f0f0f0"></div><div class="t" style="left:18px;top:116px;width:110px;overflow:hidden">pbLogWebSession</div><div class="t" style="left:133px;top:116px;width:108px;overflow:hidden;">True</div><div style="left:14px;top:133px;width:227px;height:19px;background:#fff;border-bottom:1px solid #f0f0f0"></div><div style="left:129px;top:133px;width:1px;height:19px;background:#f0f0f0"></div><div class="t" style="left:18px;top:135px;width:110px;overflow:hidden">pbStateAsUrlHash</div><div class="t" style="left:133px;top:135px;width:108px;overflow:hidden;">True</div><div style="left:14px;top:152px;width:227px;height:19px;background:#fff;border-bottom:1px solid #f0f0f0"></div><div style="left:129px;top:152px;width:1px;height:19px;background:#f0f0f0"></div><div class="t" style="left:18px;top:154px;width:110px;overflow:hidden">pbStateHashInvalidError</div><div class="t" style="left:133px;top:154px;width:108px;overflow:hidden;">True</div><div style="left:14px;top:171px;width:227px;height:19px;background:#fff;border-bottom:1px solid #f0f0f0"></div><div style="left:129px;top:171px;width:1px;height:19px;background:#f0f0f0"></div><div class="t" style="left:18px;top:173px;width:110px;overflow:hidden">pbStateRestoreRecords</div><div class="t" style="left:133px;top:173px;width:108px;overflow:hidden;">True</div><div style="left:14px;top:190px;width:227px;height:19px;background:#fff;border-bottom:1px solid #f0f0f0"></div><div style="left:129px;top:190px;width:1px;height:19px;background:#f0f0f0"></div><div class="t" style="left:18px;top:192px;width:110px;overflow:hidden">peApplicationStateMode</div><div class="t" style="left:133px;top:192px;width:108px;overflow:hidden;font-weight:bold;">asmHistoryAndUrls</div><div style="left:14px;top:209px;width:227px;height:19px;background:#fff;border-bottom:1px solid #f0f0f0"></div><div style="left:129px;top:209px;width:1px;height:19px;background:#f0f0f0"></div><div class="t" style="left:18px;top:211px;width:110px;overflow:hidden">peApplicationStyle</div><div class="t" style="left:133px;top:211px;width:108px;overflow:hidden;font-weight:bold;">wvsDrillDown</div><div style="left:14px;top:228px;width:227px;height:19px;background:#fff;border-bottom:1px solid #f0f0f0"></div><div style="left:129px;top:228px;width:1px;height:19px;background:#f0f0f0"></div><div class="t" style="left:18px;top:230px;width:110px;overflow:hidden">peLoginMode</div><div class="t" style="left:133px;top:230px;width:108px;overflow:hidden;">lmLoginRequired</div><div style="left:14px;top:247px;width:227px;height:19px;background:#fff;border-bottom:1px solid #f0f0f0"></div><div style="left:129px;top:247px;width:1px;height:19px;background:#f0f0f0"></div><div class="t" style="left:18px;top:249px;width:110px;overflow:hidden">psEncryptPassword</div><div class="t" style="left:133px;top:249px;width:108px;overflow:hidden;"></div><div style="left:0;top:266px;width:241px;height:19px;background:#f0f0f0"></div><svg style="position:absolute;left:5px;top:271px" width="8" height="8"><path d="M7 0V7H0Z" fill="#1e1e1e"/></svg><div class="t" style="left:18px;top:268px;font-weight:bold;color:#1e1e1e">Web Property</div><div style="left:14px;top:285px;width:227px;height:19px;background:#fff;border-bottom:1px solid #f0f0f0"></div><div style="left:129px;top:285px;width:1px;height:19px;background:#f0f0f0"></div><div class="t" style="left:18px;top:287px;width:110px;overflow:hidden">pbEnabled</div><div class="t" style="left:133px;top:287px;width:108px;overflow:hidden;">True</div><div style="left:14px;top:304px;width:227px;height:19px;background:#fff;border-bottom:1px solid #f0f0f0"></div><div style="left:129px;top:304px;width:1px;height:19px;background:#f0f0f0"></div><div class="t" style="left:18px;top:306px;width:110px;overflow:hidden">pbIsMobile</div><div class="t" style="left:133px;top:306px;width:108px;overflow:hidden;"></div><div style="left:14px;top:323px;width:227px;height:19px;background:#fff;border-bottom:1px solid #f0f0f0"></div><div style="left:129px;top:323px;width:1px;height:19px;background:#f0f0f0"></div><div class="t" style="left:18px;top:325px;width:110px;overflow:hidden">pbRender</div><div class="t" style="left:133px;top:325px;width:108px;overflow:hidden;">True</div><div style="left:14px;top:342px;width:227px;height:19px;background:#fff;border-bottom:1px solid #f0f0f0"></div><div style="left:129px;top:342px;width:1px;height:19px;background:#f0f0f0"></div><div class="t" style="left:18px;top:344px;width:110px;overflow:hidden">pbResponsive</div><div class="t" style="left:133px;top:344px;width:108px;overflow:hidden;">True</div><div style="left:14px;top:361px;width:227px;height:19px;background:#fff;border-bottom:1px solid #f0f0f0"></div><div style="left:129px;top:361px;width:1px;height:19px;background:#f0f0f0"></div><div class="t" style="left:18px;top:363px;width:110px;overflow:hidden">pbServerOnOrientationChange</div><div class="t" style="left:133px;top:363px;width:108px;overflow:hidden;">False</div><div style="left:14px;top:380px;width:227px;height:19px;background:#fff;border-bottom:1px solid #f0f0f0"></div><div style="left:129px;top:380px;width:1px;height:19px;background:#f0f0f0"></div><div class="t" style="left:18px;top:382px;width:110px;overflow:hidden">pbServerOnResizeWindow</div><div class="t" style="left:133px;top:382px;width:108px;overflow:hidden;">False</div><div style="left:14px;top:399px;width:227px;height:19px;background:#fff;border-bottom:1px solid #f0f0f0"></div><div style="left:129px;top:399px;width:1px;height:19px;background:#f0f0f0"></div><div class="t" style="left:18px;top:401px;width:110px;overflow:hidden">pbUpdateApplication</div><div class="t" style="left:133px;top:401px;width:108px;overflow:hidden;">True</div></div><div style="left:1897px;top:607px;width:16px;height:406px;background:#f0f0f0"></div><div style="left:1898px;top:625px;width:14px;height:166px;background:#cdcdcd"></div><svg style="position:absolute;left:1900px;top:611px" width="10" height="8"><path d="M1.5 6L5 2.5L8.5 6" stroke="#606060" stroke-width="1.8" fill="none"/></svg><svg style="position:absolute;left:1900px;top:1001px" width="10" height="8"><path d="M1.5 2L5 5.5L8.5 2" stroke="#606060" stroke-width="1.8" fill="none"/></svg>
<div style="left:0px;top:1018px;width:1920px;height:22px;background:#007acc"></div>
<div class="t" style="left:3px;top:1023px;color:#fff;letter-spacing:0.32px">C:\Data\Demo\LibXL\WebApp Demo\WebOrderMobile\AppSrc\WebApp.src</div>
<div class="t" style="left:1537px;top:1023px;color:#fff">Ln 542</div>
<div class="t" style="left:1584px;top:1023px;color:#fff">Col 12</div>
<svg style="position:absolute;left:1758px;top:1021px;" width="18" height="18" viewBox="0 0 18 18"><circle cx="9" cy="9" r="8" fill="#fff"/><circle cx="9" cy="9" r="6" fill="#fff" stroke="#8c8c8c" stroke-width="2"/><path d="M5 5L13 13" stroke="#8c8c8c" stroke-width="2.2"/></svg>
<div class="t" style="left:1793px;top:1023px;color:#fff">INS</div>
<div class="t" style="left:1837px;top:1023px;color:#7fc3ef">CAPS</div>
<div class="t" style="left:1881px;top:1023px;color:#fff">NUM</div>
<div style="left:0px;top:1040px;width:1920px;height:40px;background:#28231e"></div>

<svg style="position:absolute;left:0;top:0" width="1920" height="1080" viewBox="0 0 1920 1080"><g fill="#8e8e96"><rect x="10" y="53" width="1" height="1"/><rect x="14" y="53" width="1" height="1"/><rect x="12" y="55" width="1" height="1"/><rect x="10" y="57" width="1" height="1"/><rect x="14" y="57" width="1" height="1"/><rect x="12" y="59" width="1" height="1"/><rect x="10" y="61" width="1" height="1"/><rect x="14" y="61" width="1" height="1"/><rect x="12" y="63" width="1" height="1"/><rect x="10" y="65" width="1" height="1"/><rect x="14" y="65" width="1" height="1"/><rect x="12" y="67" width="1" height="1"/><rect x="10" y="69" width="1" height="1"/><rect x="14" y="69" width="1" height="1"/></g><g fill="#8e8e96"><rect x="10" y="28" width="1" height="1"/><rect x="14" y="28" width="1" height="1"/><rect x="12" y="30" width="1" height="1"/><rect x="10" y="32" width="1" height="1"/><rect x="14" y="32" width="1" height="1"/><rect x="12" y="34" width="1" height="1"/><rect x="10" y="36" width="1" height="1"/><rect x="14" y="36" width="1" height="1"/><rect x="12" y="38" width="1" height="1"/><rect x="10" y="40" width="1" height="1"/><rect x="14" y="40" width="1" height="1"/><rect x="12" y="42" width="1" height="1"/><rect x="10" y="44" width="1" height="1"/><rect x="14" y="44" width="1" height="1"/></g><g transform="translate(26 53)"><path d="M7.5 3.5H12L14.5 6V14.5H5.5V9" fill="none" stroke="#333" stroke-width="1.3"/><path d="M11.5 3V6.5H15" fill="none" stroke="#333" stroke-width="1.2"/><g stroke="#c27d0e" stroke-width="1"><path d="M3.5 0.5V6.5M0.5 3.5H6.5M1.4 1.4L5.6 5.6M5.6 1.4L1.4 5.6"/></g><circle cx="3.5" cy="3.5" r="1.3" fill="#f1c24a"/></g><g transform="translate(47 53)"><path d="M7.5 4.5H14.5V14.5H1V9.5" fill="none" stroke="#dcb67a" stroke-width="1"/><path d="M1 10H11L14.5 14.5H1Z" fill="#dcb67a"/><path d="M2 7.5C2 3.5 5 2.5 7.5 3" fill="none" stroke="#00539c" stroke-width="2"/><path d="M6 0.5L9.5 3L6 5.5Z" fill="#00539c"/></g><g transform="translate(77 55)"><path d="M0 0H9.5L12 2.5V12H0Z" fill="#7a7a7a"/><rect x="3" y="0" width="5.5" height="4" fill="#eeeef2"/><rect x="6" y="1" width="1.2" height="2" fill="#7a7a7a"/></g><g transform="translate(98 54)"><g transform="translate(6 0)"><path d="M0 0H6.5L8.5 2V9H0Z" fill="#00539c" stroke="#eeeef2" stroke-width="0.6"/><rect x="2" y="0.3" width="4" height="3" fill="#eeeef2"/><rect x="4.3" y="1" width="1" height="1.5" fill="#00539c"/></g><g transform="translate(0 5)"><path d="M0 0H6.5L8.5 2V9H0Z" fill="#00539c" stroke="#eeeef2" stroke-width="0.6"/><rect x="2" y="0.3" width="4" height="3" fill="#eeeef2"/><rect x="4.3" y="1" width="1" height="1.5" fill="#00539c"/></g></g><g transform="translate(127 54)"><path d="M3 0.5L6.5 8.5M10 0.5L6.5 8.5" stroke="#717171" stroke-width="1.4" fill="none"/><circle cx="3" cy="11" r="2.3" fill="none" stroke="#717171" stroke-width="1.2"/><circle cx="10" cy="11" r="2.3" fill="none" stroke="#717171" stroke-width="1.2"/></g><g transform="translate(149 54)"><path d="M4.5 3V0.5H9.5L11.5 2.5V10.5H9" fill="none" stroke="#717171" stroke-width="1.1"/><path d="M0.5 4.5H5.5L7.5 6.5V13.5H0.5Z" fill="none" stroke="#717171" stroke-width="1.1"/></g><g transform="translate(170 54)"><path d="M2.5 6V2.5H5L6 0.8H8L9 2.5H11.5V13.5H8" fill="none" stroke="#333" stroke-width="1.1"/><rect x="0.5" y="7.5" width="6" height="6" fill="none" stroke="#333" stroke-width="1.1"/></g><g transform="translate(191 54)"><path d="M1 0.5L13 12.5M12.5 0.5L1 12.5" stroke="#a1260d" stroke-width="2.2"/></g><g transform="translate(221 54)"><path d="M4 13L9.5 7.5C11.5 5.5 11 2.5 8.5 1.5C6.5 0.8 4.5 1.8 3.5 3.5" fill="none" stroke="#7a7a7a" stroke-width="1.8"/><path d="M0 1V6H5Z" fill="#7a7a7a"/></g><g transform="translate(243 54)"><g transform="translate(13 0) scale(-1 1)"><path d="M4 13L9.5 7.5C11.5 5.5 11 2.5 8.5 1.5C6.5 0.8 4.5 1.8 3.5 3.5" fill="none" stroke="#7a7a7a" stroke-width="1.8"/><path d="M0 1V6H5Z" fill="#7a7a7a"/></g></g><g transform="translate(272 56)"><rect x="0.5" y="0.5" width="10.5" height="10.5" fill="#fff" stroke="#6e2a1c" stroke-width="1"/><circle cx="5.75" cy="5.75" r="3.3" fill="#a82a10"/></g><g transform="translate(298 55)"><rect x="3" y="0" width="8.5" height="4" fill="#333"/><rect x="4" y="0.9" width="6.5" height="2.6" fill="#fff"/><rect x="0" y="4" width="14.5" height="6.5" fill="#333"/><rect x="1" y="5" width="1" height="1" fill="#fff"/><rect x="2.8" y="5" width="1" height="1" fill="#fff"/><rect x="3" y="9" width="8.5" height="4" fill="#333"/><rect x="4" y="10" width="6.5" height="2" fill="#fff"/></g><g transform="translate(343 53)"><rect x="0.5" y="0.5" width="8" height="10" fill="#fff" stroke="#333" stroke-width="1"/><path d="M2 2.5H6.5M2 4.5H6.5M2 6.5H5M2 8.5H5" stroke="#333"/><rect x="6.5" y="6.5" width="9" height="9" fill="#fff" stroke="#333" stroke-width="1"/><rect x="6.5" y="6.5" width="9" height="2" fill="#333"/><path d="M8 10.5H9.5M8 13H9.5" stroke="#333"/><rect x="10.5" y="9.8" width="3.5" height="1.6" fill="#333"/><rect x="10.5" y="12.2" width="3.5" height="1.6" fill="#333"/></g><g transform="translate(372 54)"><rect x="0.5" y="0.5" width="14" height="13.5" fill="#fff" stroke="#333" stroke-width="1"/><rect x="0.5" y="0.5" width="14" height="2.5" fill="#333"/><text x="2.2" y="11.6" font-family="Liberation Sans" font-weight="bold" font-size="8.5" fill="#d9541e">DF</text></g><g transform="translate(394 54)"><rect x="0.5" y="0.5" width="14" height="13.5" fill="#fff" stroke="#333" stroke-width="1"/><rect x="0.5" y="0.5" width="14" height="2.5" fill="#333"/><circle cx="5" cy="6" r="2" fill="#d59a30"/><circle cx="10" cy="8.5" r="1.8" fill="#d59a30"/><circle cx="9.5" cy="12" r="1.5" fill="#d59a30"/></g><g transform="translate(416 54)"><path d="M7 1.5C7 0 14 0 14 1.5V8.5C14 10 7 10 7 8.5Z" fill="#333"/><ellipse cx="10.5" cy="1.8" rx="2.8" ry="0.9" fill="#fff"/><rect x="2.5" y="5.5" width="2.5" height="2" fill="#333"/><path d="M3.7 7.5V9.5M1 9.5H6.5M1 9.5V12M6.5 9.5V12" stroke="#333" stroke-width="1" fill="none"/><rect x="0" y="11.5" width="2.5" height="2" fill="#333"/><rect x="5.3" y="11.5" width="2.5" height="2" fill="#333"/></g><g transform="translate(438 54)"><rect x="3.5" y="0.5" width="10.5" height="12.5" fill="#fff" stroke="#333" stroke-width="1"/><path d="M5.5 2.5H8M9.5 2.5H12.5M5.5 4.5H8M9.5 4.5H12.5M6 6.5H8M9.5 6.5H12.5M6 8.5H8M9.5 8.5H12.5M6 10.5H8M9.5 10.5H12.5" stroke="#333" stroke-width="1.1"/><path d="M0 6.5C0 9 1 10 1.8 10.3V14H3.8V10.3C4.6 10 5.6 9 5.6 6.5L4.3 7.8V5.5H1.3V7.8Z" fill="#333" stroke="#eeeef2" stroke-width="0.7"/></g><g transform="translate(460 54)"><path d="M7.5 0.5C3 0.5 0 3.5 0 7.5C0 11.5 3.5 14 7.5 14C11 14 14 12.5 14 10.5C14 9 12.5 8.5 11 8.5C9 8.5 9 6.5 11 5.5C13.5 4 12.5 0.5 7.5 0.5Z" fill="#333"/><g fill="#fff"><circle cx="6.5" cy="3.5" r="0.9"/><circle cx="3.5" cy="5" r="0.9"/><circle cx="2.5" cy="8" r="0.9"/><circle cx="3.5" cy="11" r="0.9"/><circle cx="6.5" cy="12" r="0.9"/></g></g><g transform="translate(481 54)"><path d="M6.5 2.5V0.5H15.5V9" fill="none" stroke="#333" stroke-width="1"/><path d="M4 4.5V3H13V9" fill="none" stroke="#333" stroke-width="1.3"/><rect x="0.5" y="6.5" width="9.5" height="8.5" fill="#fff" stroke="#333" stroke-width="1"/><rect x="0.5" y="6.5" width="9.5" height="2" fill="#333"/><path d="M1 10.5H9M1 12.5H9M3.5 8.5V15M6.5 8.5V15" stroke="#333" stroke-width="0.9"/><circle cx="11" cy="10.5" r="2.5" fill="#eeeef2" stroke="#333" stroke-width="1.1"/><path d="M12.8 12.3L15 14.5" stroke="#333" stroke-width="1.4"/></g><g transform="translate(510 54)"><path d="M4.5 4V0.5H10.5L13.5 3.5V11.5H9" fill="none" stroke="#333" stroke-width="1.1"/><path d="M10.5 0.5V3.5H13.5" fill="none" stroke="#333" stroke-width="1"/><rect x="0" y="8" width="7.5" height="5.5" fill="#333"/><path d="M3 9.5L1.5 10.8L3 12M4.5 9.5L6 10.8L4.5 12" stroke="#fff" stroke-width="0.9" fill="none"/></g><g transform="translate(555 56)"><path d="M0 5.5H4" stroke="#00539c" stroke-width="1.8"/><path d="M3.5 2.8L6.5 5.5L3.5 8.2Z" fill="#00539c"/><path d="M7 3L11.5 0.5L16 3V8.5L11.5 11L7 8.5Z M7 3L11.5 5.5L16 3 M11.5 5.5V11" fill="none" stroke="#333" stroke-width="1"/></g><g transform="translate(578 54)"><rect x="0" y="0.5" width="2.5" height="2" fill="#333"/><rect x="1.8" y="2.5" width="2.5" height="2" fill="#333"/><rect x="3.8" y="4.3" width="2.5" height="2" fill="#333"/><rect x="5" y="6" width="2.5" height="2" fill="#333"/><path d="M8 1.5H10C12 1.5 12 3.5 12 5V8" fill="none" stroke="#333" stroke-width="1.6"/><path d="M9.5 7L12 10L14.5 7Z" fill="#333"/><rect x="0" y="10.5" width="3.5" height="3" fill="#333"/><rect x="5" y="10.5" width="3.5" height="3" fill="#333"/><rect x="10" y="10.5" width="3.5" height="3" fill="#333"/></g><g transform="translate(605 54)"><rect x="0.5" y="0.5" width="15" height="13.5" fill="#fff" stroke="#333" stroke-width="1"/><rect x="0.5" y="0.5" width="15" height="2" fill="#333"/><path d="M1 13.5L4.5 5.5L8.5 13.5Z" fill="#f5c518"/><rect x="4" y="8.5" width="1" height="2.5" fill="#333"/><rect x="4" y="11.7" width="1" height="1" fill="#333"/><path d="M9 8L10.5 10.5L14 4.5" fill="none" stroke="#333" stroke-width="1.4"/></g><g transform="translate(630 54)"><path d="M3 2.5H0.5V13.5H9.5V2.5H7" fill="none" stroke="#333" stroke-width="1.1"/><path d="M3 3.5V2C3 0.5 7 0.5 7 2V3.5Z" fill="none" stroke="#333" stroke-width="1"/><path d="M2.5 8L5 11.5L10 4" fill="none" stroke="#333" stroke-width="1.5"/></g><g transform="translate(650 54)"><path d="M9.5 2.5V0.5H0.5V13.5H9.5V11.5" fill="none" stroke="#333" stroke-width="1.1"/><path d="M3 7H9" stroke="#333" stroke-width="2"/><path d="M8 2.5L13.5 7L8 11.5Z" fill="#333"/></g><g transform="translate(672 55)"><path d="M3.5 5V0.5H8L11.5 4V12.5H7" fill="none" stroke="#333" stroke-width="1.1"/><path d="M7.5 0.5V4.5H11.5" fill="none" stroke="#333" stroke-width="1"/><circle cx="5" cy="9" r="2.2" fill="none" stroke="#00539c" stroke-width="1.1"/><path d="M3.5 10.5L0.7 13.3" stroke="#00539c" stroke-width="1.3"/></g><g transform="translate(719 54)"><path d="M4 0H12V14L8 10.5L4 14Z" fill="#333"/><rect x="0" y="2.5" width="9" height="5.5" fill="#333" stroke="#eeeef2" stroke-width="0.8"/><path d="M1.8 5.2H4M2.8 4.2L1.8 5.2L2.8 6.2M5.5 3.8H7.5V6.5H5.5Z" stroke="#fff" stroke-width="0.8" fill="none"/></g><g transform="translate(746 54)"><path d="M6 0H14V14L10 10.5L6 14Z" fill="#333"/><rect x="0.5" y="3" width="2" height="6" fill="#00539c"/><path d="M4 6H10" stroke="#eeeef2" stroke-width="4"/><path d="M5 6H10" stroke="#00539c" stroke-width="1.8"/><path d="M3 6L6 3V9Z" fill="#00539c"/></g><g transform="translate(769 54)"><path d="M5 0H13V14L9 10.5L5 14Z" fill="#333"/><path d="M2 6H8" stroke="#eeeef2" stroke-width="4"/><path d="M3 6H8" stroke="#00539c" stroke-width="1.8"/><path d="M0 6L3.5 2.5V9.5Z" fill="#00539c"/></g><g transform="translate(790 54)"><path d="M0 0H8V14L4 10.5L0 14Z" fill="#333"/><path d="M5 6H11" stroke="#eeeef2" stroke-width="4"/><path d="M5 6H10" stroke="#00539c" stroke-width="1.8"/><path d="M13 6L9.5 2.5V9.5Z" fill="#00539c"/></g><g transform="translate(812 54)"><path d="M0 0H8V14L4 10.5L0 14Z" fill="#333"/><path d="M4 6H10" stroke="#eeeef2" stroke-width="4"/><path d="M4 6H9" stroke="#00539c" stroke-width="1.8"/><path d="M11.5 6L8.5 3V9Z" fill="#00539c"/><rect x="12" y="3" width="2" height="6" fill="#00539c"/></g><g transform="translate(840 54)"><path d="M0.5 0.5L5.5 5.5M5.5 0.5L0.5 5.5" stroke="#c42b1c" stroke-width="1.3"/><path d="M5 2H10V13L7.5 10.5" fill="#333"/><path d="M11.5 4V13M13.5 6V13" stroke="#333" stroke-width="1"/></g><g transform="translate(886 54)"><circle cx="9" cy="5" r="4.5" fill="none" stroke="#333" stroke-width="1.2"/><path d="M5.8 8.2L1 13" stroke="#333" stroke-width="2.2"/></g><g transform="translate(909 54)"><path d="M4 3H8" stroke="#00539c" stroke-width="2"/><path d="M0.5 3L4 0V6Z" fill="#00539c"/><circle cx="10" cy="8" r="3" fill="none" stroke="#333" stroke-width="1.2"/><path d="M7.8 10.2L4.8 13.2" stroke="#333" stroke-width="1.5"/></g><g transform="translate(931 54)"><path d="M0 3H4" stroke="#00539c" stroke-width="2"/><path d="M7.5 3L4 0V6Z" fill="#00539c"/><circle cx="10" cy="8" r="3" fill="none" stroke="#333" stroke-width="1.2"/><path d="M7.8 10.2L4.8 13.2" stroke="#333" stroke-width="1.5"/></g><g transform="translate(952 54)"><path d="M2.5 2.5V1.5H10.5L12.5 3.5V5" fill="none" stroke="#333" stroke-width="1"/><path d="M4 1V0H10" fill="none" stroke="#333" stroke-width="0.8"/><path d="M5 13.5H0.5V3.5H5" fill="none" stroke="#333" stroke-width="1.1"/><rect x="2" y="6.5" width="1.3" height="1.3" fill="#333"/><rect x="2" y="9.5" width="1.3" height="1.3" fill="#333"/><circle cx="8" cy="8" r="3.5" fill="none" stroke="#333" stroke-width="1.2"/><path d="M10.5 10.5L13.5 13.5" stroke="#333" stroke-width="1.5"/></g><g transform="translate(980 54)"><path d="M6 1.5H4C2.5 1.5 2 2.5 2 4V5" fill="none" stroke="#00539c" stroke-width="1.3"/><path d="M0 4.5L2 7.5L4 4.5Z" fill="#00539c"/><text x="6.5" y="6" font-family="Liberation Sans" font-weight="bold" font-size="6.5" fill="#333">ab</text><rect x="0" y="8" width="10" height="5.5" fill="#333"/><text x="0.8" y="12.8" font-family="Liberation Sans" font-weight="bold" font-size="6" fill="#fff">a c</text></g><g transform="translate(1002 54)"><path d="M5 1.5H3.5C2.5 1.5 2 2.5 2 3.5V4.5" fill="none" stroke="#00539c" stroke-width="1.3"/><path d="M0 4L2 7L4 4Z" fill="#00539c"/><path d="M8 2H10L10.8 1H14V8H8Z" fill="#dcb67a"/><path d="M0 8H3L4 7H8V14H0Z" fill="#dcb67a"/></g><g transform="translate(1047 53)"><circle cx="8" cy="8" r="8" fill="#3e72b8"/><path d="M5.2 5.8C5.2 2.6 10.8 2.6 10.8 5.8C10.8 8 8 8 8 10" fill="none" stroke="#fff" stroke-width="2"/><circle cx="8" cy="12.6" r="1.2" fill="#fff"/></g><g transform="translate(1071 55)"><path d="M9.5 1.5A5.5 5.5 0 1 0 11.5 10.5" fill="none" stroke="#333" stroke-width="1.4"/><path d="M8.5 3.8A3.2 3.2 0 1 0 9.2 9.2" fill="none" stroke="#333" stroke-width="1.1"/><path d="M10 1.5L12 3.5M11.5 9L12.5 7" stroke="#333" stroke-width="1.2"/><text x="5.6" y="9.3" font-family="Liberation Sans" font-size="5" fill="#333">1</text></g><g transform="translate(1092 55)"><rect x="0.5" y="0.5" width="13.5" height="11.5" fill="#fff" stroke="#333" stroke-width="1.1"/><g fill="#333"><rect x="3" y="2.5" width="3" height="1.5"/><rect x="8" y="2.5" width="3" height="1.5"/><rect x="3" y="5.5" width="3" height="1.5"/><rect x="8" y="5.5" width="3" height="1.5"/><rect x="3" y="8.5" width="3" height="1.5"/><rect x="8" y="8.5" width="3" height="1.5"/></g></g><rect x="68" y="52" width="1" height="20" fill="#cccedb"/><rect x="118" y="52" width="1" height="20" fill="#cccedb"/><rect x="212" y="52" width="1" height="20" fill="#cccedb"/><rect x="262" y="52" width="1" height="20" fill="#cccedb"/><rect x="290" y="52" width="1" height="20" fill="#cccedb"/><rect x="364" y="52" width="1" height="20" fill="#cccedb"/><rect x="502" y="52" width="1" height="20" fill="#cccedb"/><rect x="598" y="52" width="1" height="20" fill="#cccedb"/><rect x="738" y="52" width="1" height="20" fill="#cccedb"/><rect x="832" y="52" width="1" height="20" fill="#cccedb"/><rect x="972" y="52" width="1" height="20" fill="#cccedb"/><g fill="#8e8e96"><rect x="328" y="53" width="1" height="1"/><rect x="332" y="53" width="1" height="1"/><rect x="330" y="55" width="1" height="1"/><rect x="328" y="57" width="1" height="1"/><rect x="332" y="57" width="1" height="1"/><rect x="330" y="59" width="1" height="1"/><rect x="328" y="61" width="1" height="1"/><rect x="332" y="61" width="1" height="1"/><rect x="330" y="63" width="1" height="1"/><rect x="328" y="65" width="1" height="1"/><rect x="332" y="65" width="1" height="1"/><rect x="330" y="67" width="1" height="1"/><rect x="328" y="69" width="1" height="1"/><rect x="332" y="69" width="1" height="1"/></g><g fill="#8e8e96"><rect x="540" y="53" width="1" height="1"/><rect x="544" y="53" width="1" height="1"/><rect x="542" y="55" width="1" height="1"/><rect x="540" y="57" width="1" height="1"/><rect x="544" y="57" width="1" height="1"/><rect x="542" y="59" width="1" height="1"/><rect x="540" y="61" width="1" height="1"/><rect x="544" y="61" width="1" height="1"/><rect x="542" y="63" width="1" height="1"/><rect x="540" y="65" width="1" height="1"/><rect x="544" y="65" width="1" height="1"/><rect x="542" y="67" width="1" height="1"/><rect x="540" y="69" width="1" height="1"/><rect x="544" y="69" width="1" height="1"/></g><g fill="#8e8e96"><rect x="702" y="53" width="1" height="1"/><rect x="706" y="53" width="1" height="1"/><rect x="704" y="55" width="1" height="1"/><rect x="702" y="57" width="1" height="1"/><rect x="706" y="57" width="1" height="1"/><rect x="704" y="59" width="1" height="1"/><rect x="702" y="61" width="1" height="1"/><rect x="706" y="61" width="1" height="1"/><rect x="704" y="63" width="1" height="1"/><rect x="702" y="65" width="1" height="1"/><rect x="706" y="65" width="1" height="1"/><rect x="704" y="67" width="1" height="1"/><rect x="702" y="69" width="1" height="1"/><rect x="706" y="69" width="1" height="1"/></g><g fill="#8e8e96"><rect x="870" y="53" width="1" height="1"/><rect x="874" y="53" width="1" height="1"/><rect x="872" y="55" width="1" height="1"/><rect x="870" y="57" width="1" height="1"/><rect x="874" y="57" width="1" height="1"/><rect x="872" y="59" width="1" height="1"/><rect x="870" y="61" width="1" height="1"/><rect x="874" y="61" width="1" height="1"/><rect x="872" y="63" width="1" height="1"/><rect x="870" y="65" width="1" height="1"/><rect x="874" y="65" width="1" height="1"/><rect x="872" y="67" width="1" height="1"/><rect x="870" y="69" width="1" height="1"/><rect x="874" y="69" width="1" height="1"/></g><g fill="#8e8e96"><rect x="1032" y="53" width="1" height="1"/><rect x="1036" y="53" width="1" height="1"/><rect x="1034" y="55" width="1" height="1"/><rect x="1032" y="57" width="1" height="1"/><rect x="1036" y="57" width="1" height="1"/><rect x="1034" y="59" width="1" height="1"/><rect x="1032" y="61" width="1" height="1"/><rect x="1036" y="61" width="1" height="1"/><rect x="1034" y="63" width="1" height="1"/><rect x="1032" y="65" width="1" height="1"/><rect x="1036" y="65" width="1" height="1"/><rect x="1034" y="67" width="1" height="1"/><rect x="1032" y="69" width="1" height="1"/><rect x="1036" y="69" width="1" height="1"/></g><g fill="#8e8e96"><rect x="13" y="79" width="1" height="1"/><rect x="17" y="79" width="1" height="1"/><rect x="15" y="81" width="1" height="1"/><rect x="13" y="83" width="1" height="1"/><rect x="17" y="83" width="1" height="1"/><rect x="15" y="85" width="1" height="1"/><rect x="13" y="87" width="1" height="1"/><rect x="17" y="87" width="1" height="1"/><rect x="15" y="89" width="1" height="1"/><rect x="13" y="91" width="1" height="1"/><rect x="17" y="91" width="1" height="1"/><rect x="15" y="93" width="1" height="1"/><rect x="13" y="95" width="1" height="1"/><rect x="17" y="95" width="1" height="1"/></g><path d="M100 85H106L103 88Z" fill="#717171"/><g transform="translate(118 79)"><path d="M7 0V6" stroke="#333" stroke-width="1.6"/><path d="M3.5 3L7 7L10.5 3" fill="none" stroke="#333" stroke-width="1.6"/><path d="M0.5 6V14.5H13.5V6" fill="none" stroke="#333" stroke-width="1.1"/><g fill="#333"><circle cx="3" cy="9" r="0.9"/><circle cx="7" cy="9" r="0.9"/><circle cx="11" cy="9" r="0.9"/><circle cx="5" cy="11.5" r="0.9"/><circle cx="9" cy="11.5" r="0.9"/></g></g><g transform="translate(140 80)"><circle cx="7" cy="7" r="7" fill="#339933"/><path d="M5 3.5V10.5L10.5 7Z" fill="#fff"/></g><g transform="translate(161.5 80)"><circle cx="7" cy="7" r="7" fill="#808080"/><rect x="4" y="4" width="2.2" height="6" fill="#fff"/><rect x="7.8" y="4" width="2.2" height="6" fill="#fff"/></g><g transform="translate(186 82)"><rect x="0" y="0" width="2.5" height="10" fill="#a8a8a8"/><path d="M4 0V10L10 5Z" fill="#a8a8a8"/></g><g transform="translate(213 81)"><path d="M1 6C2.5 1.5 9 1 11 5" fill="none" stroke="#7a7a7a" stroke-width="1.6"/><path d="M8.5 5.5H12.5V1.5Z" fill="#7a7a7a"/><circle cx="6" cy="11" r="1.7" fill="#7a7a7a"/></g><g transform="translate(238 81)"><path d="M3 0V6.5" stroke="#7a7a7a" stroke-width="1.6"/><path d="M0 3.5L3 7L6 3.5" fill="none" stroke="#7a7a7a" stroke-width="1.6"/><circle cx="3" cy="11.3" r="1.8" fill="#7a7a7a"/></g><g transform="translate(260 81)"><path d="M3 1.5V8" stroke="#7a7a7a" stroke-width="1.6"/><path d="M0 4.5L3 0.8L6 4.5" fill="none" stroke="#7a7a7a" stroke-width="1.6"/><circle cx="3" cy="11.3" r="1.8" fill="#7a7a7a"/></g><g transform="translate(279 82)"><path d="M0 0V10L6 5Z" fill="#a8a8a8"/><path d="M8.5 0.5H12.5M10.5 0.5V9.5M8.5 9.5H12.5" stroke="#a8a8a8" stroke-width="1"/></g><g transform="translate(301 80)"><path d="M5 0.8C3 0.8 2.5 2.5 3 4.5" fill="none" stroke="#7a7a7a" stroke-width="1.3"/><path d="M0.5 3.5L3 6.5L5.5 3.5" fill="none" stroke="#7a7a7a" stroke-width="1.3"/><path d="M6 7.5H12.5M6 10.5H12.5M8 6V13M10.8 6V13" stroke="#7a7a7a" stroke-width="1.1"/></g><g transform="translate(328 80)"><path d="M2.5 8L1 6.5C0 4 2 0.5 5.5 1C7.5 1.3 8.5 2.5 8.5 4" fill="none" stroke="#7a7a7a" stroke-width="1.4"/><path d="M6.5 3.5L9.5 4.5L9.5 1.2Z" fill="#7a7a7a"/><path d="M8 7V13.5L12.5 10.2Z" fill="#a8a8a8"/></g><g transform="translate(350.5 80.5)"><circle cx="6.5" cy="6.5" r="6.2" fill="none" stroke="#7a7a7a" stroke-width="0.9"/><rect x="4" y="4" width="5" height="5" fill="#808080"/></g><g transform="translate(395 80)"><path d="M1.5 3.5V0.5H14.5V10.5H9" fill="none" stroke="#333" stroke-width="1.1"/><rect x="1.5" y="0.5" width="13" height="2" fill="#333"/><circle cx="4.5" cy="9" r="4.2" fill="#e51400"/></g><g transform="translate(418 80)"><path d="M4 2V0.5H13.5V9.5M2.5 3.5V2H12V9" fill="none" stroke="#333" stroke-width="1"/><path d="M0.5 4.5H10.5V12.5H0.5Z M0.5 4.5L5.5 9L10.5 4.5" fill="none" stroke="#333" stroke-width="1.1"/><g fill="#eeeef2" stroke="#333" stroke-width="0.9"><circle cx="9" cy="11.7" r="1.5"/><circle cx="12.3" cy="11.7" r="1.5"/></g></g><g transform="translate(446 80)"><path d="M2 0.5H0.5V7.5H2M12 0.5H13.5V7.5H12" fill="none" stroke="#8a8a8a" stroke-width="1.2"/><path d="M3 2.5L7 0.5L11 2.5V6L7 7.5L3 6Z" fill="#8a8a8a"/><path d="M3 2.5L7 4.5L11 2.5M7 4.5V7.5" stroke="#b0b0b0" stroke-width="0.6" fill="none"/><g transform="translate(2.8 9)" fill="none" stroke="#9a9a9a" stroke-width="1"><ellipse cx="2" cy="3.3" rx="1.8" ry="1.5"/><ellipse cx="6.5" cy="3.3" rx="1.8" ry="1.5"/><path d="M0.5 2.5L3 0M8 2.5L5.5 0M3.7 3H4.8"/></g></g><g transform="translate(468 80)"><path d="M2 0.5H0.5V7.5H2M13 0.5H14.5V7.5H13" fill="none" stroke="#8a8a8a" stroke-width="1.2"/><circle cx="7.5" cy="4" r="4" fill="#8a8a8a"/><path d="M3.5 2.8H11.5M3.5 5.2H11.5M6.3 0V8M8.7 0V8" stroke="#eeeef2" stroke-width="0.9"/><g transform="translate(3.3 9)" fill="none" stroke="#9a9a9a" stroke-width="1"><ellipse cx="2" cy="3.3" rx="1.8" ry="1.5"/><ellipse cx="6.5" cy="3.3" rx="1.8" ry="1.5"/><path d="M0.5 2.5L3 0M8 2.5L5.5 0M3.7 3H4.8"/></g></g><g transform="translate(490 82)"><g fill="none" stroke="#8a8a8a" stroke-width="1.4"><rect x="0.8" y="5" width="5" height="4.2" rx="2"/><rect x="8.2" y="5" width="5" height="4.2" rx="2"/><path d="M5.8 6.5H8.2M1 5.5L4 0.5M13 5.5L10 0.5"/></g></g><g transform="translate(511 80)"><rect x="4" y="0" width="10.5" height="2.2" fill="#8a8a8a"/><path d="M4.5 2V11.5H14V2" fill="none" stroke="#8a8a8a" stroke-width="1.1"/><path d="M5 5.5H14M5 8.5H14M7.8 2.5V11.5M11 2.5V11.5" stroke="#8a8a8a" stroke-width="1.1"/><rect x="0" y="8.5" width="9" height="6" fill="#eeeef2"/><g transform="translate(0 9.5)" fill="none" stroke="#9a9a9a" stroke-width="1"><ellipse cx="2" cy="3.3" rx="1.8" ry="1.5"/><ellipse cx="6.5" cy="3.3" rx="1.8" ry="1.5"/><path d="M0.5 2.5L3 0M8 2.5L5.5 0M3.7 3H4.8"/></g></g><g transform="translate(540 80)"><rect x="4" y="0" width="10" height="2.5" fill="#7a7a7a"/><rect x="4" y="5.5" width="10" height="2.5" fill="#7a7a7a"/><rect x="4" y="10.5" width="10" height="2.5" fill="#7a7a7a"/><path d="M2.5 4.5H1.5C0.5 4.5 0.5 5 0.5 6V12C0.5 13 0.5 13.5 1.5 13.5H2.5" fill="none" stroke="#7a7a7a" stroke-width="1.1"/></g><g transform="translate(586 80)"><rect x="1.5" y="0" width="13" height="2.5" fill="#333"/><path d="M9 2.5H14.5V12.5H9" fill="#333"/><rect x="10.2" y="3.6" width="3.2" height="1.8" fill="#fff"/><rect x="10.2" y="6.6" width="3.2" height="1.8" fill="#fff"/><rect x="10.2" y="9.6" width="3.2" height="1.8" fill="#fff"/><path d="M0 5C0 3.5 8 3.5 8 5V13C8 14.5 0 14.5 0 13Z" fill="#333"/><ellipse cx="4" cy="5.3" rx="3" ry="1" fill="#fff"/></g><g transform="translate(608 80)"><g fill="#333"><rect x="3" y="0" width="2.3" height="2.3"/><rect x="7" y="0" width="2.3" height="2.3"/><rect x="11" y="0" width="2.3" height="2.3"/><rect x="11" y="4" width="2.3" height="2.3"/><rect x="11" y="8" width="2.3" height="2.3"/><rect x="8.7" y="8" width="1" height="2.3"/><rect x="8.7" y="4" width="1" height="2.3"/></g><path d="M0 5C0 3.5 7.5 3.5 7.5 5V13C7.5 14.5 0 14.5 0 13Z" fill="#333"/><ellipse cx="3.75" cy="5.3" rx="2.8" ry="1" fill="#fff"/></g><g transform="translate(630 80)"><circle cx="9.5" cy="5.5" r="5" fill="none" stroke="#333" stroke-width="1"/><path d="M4.5 5.5H14.5M9.5 0.5V10.5M5.5 3H13.5M5.5 8H13.5" stroke="#333" stroke-width="0.8"/><circle cx="4" cy="6" r="2.8" fill="#333" stroke="#eeeef2" stroke-width="0.8"/><path d="M0 14V9.5L0.5 9H2L4 11L6 9H7.5L8 9.5V14Z" fill="#333" stroke="#eeeef2" stroke-width="0.6"/></g><rect x="110" y="78" width="1" height="20" fill="#cccedb"/><rect x="204" y="78" width="1" height="20" fill="#cccedb"/><rect x="320" y="78" width="1" height="20" fill="#cccedb"/><rect x="438" y="78" width="1" height="20" fill="#cccedb"/><rect x="532" y="78" width="1" height="20" fill="#cccedb"/><g fill="#8e8e96"><rect x="380" y="79" width="1" height="1"/><rect x="384" y="79" width="1" height="1"/><rect x="382" y="81" width="1" height="1"/><rect x="380" y="83" width="1" height="1"/><rect x="384" y="83" width="1" height="1"/><rect x="382" y="85" width="1" height="1"/><rect x="380" y="87" width="1" height="1"/><rect x="384" y="87" width="1" height="1"/><rect x="382" y="89" width="1" height="1"/><rect x="380" y="91" width="1" height="1"/><rect x="384" y="91" width="1" height="1"/><rect x="382" y="93" width="1" height="1"/><rect x="380" y="95" width="1" height="1"/><rect x="384" y="95" width="1" height="1"/></g><g fill="#8e8e96"><rect x="570" y="79" width="1" height="1"/><rect x="574" y="79" width="1" height="1"/><rect x="572" y="81" width="1" height="1"/><rect x="570" y="83" width="1" height="1"/><rect x="574" y="83" width="1" height="1"/><rect x="572" y="85" width="1" height="1"/><rect x="570" y="87" width="1" height="1"/><rect x="574" y="87" width="1" height="1"/><rect x="572" y="89" width="1" height="1"/><rect x="570" y="91" width="1" height="1"/><rect x="574" y="91" width="1" height="1"/><rect x="572" y="93" width="1" height="1"/><rect x="570" y="95" width="1" height="1"/><rect x="574" y="95" width="1" height="1"/></g><g fill="#8e8e96"><rect x="660" y="79" width="1" height="1"/><rect x="664" y="79" width="1" height="1"/><rect x="662" y="81" width="1" height="1"/><rect x="660" y="83" width="1" height="1"/><rect x="664" y="83" width="1" height="1"/><rect x="662" y="85" width="1" height="1"/><rect x="660" y="87" width="1" height="1"/><rect x="664" y="87" width="1" height="1"/><rect x="662" y="89" width="1" height="1"/><rect x="660" y="91" width="1" height="1"/><rect x="664" y="91" width="1" height="1"/><rect x="662" y="93" width="1" height="1"/><rect x="660" y="95" width="1" height="1"/><rect x="664" y="95" width="1" height="1"/></g><g transform="translate(6 126.5)"><path d="M6 4.5L10.5 1L15 4.5V11.5L10.5 14.5L6 11.5" fill="none" stroke="#7a7a7a" stroke-width="1.1"/><path d="M10.5 8L15 4.5M10.5 8V14.5" fill="none" stroke="#7a7a7a" stroke-width="1.1"/><path d="M0 8.5L3.5 3.5L7 8.5H5V12H2V8.5Z" fill="#7a7a7a"/><rect x="2" y="12.8" width="3" height="1.8" fill="#7a7a7a"/></g><g transform="translate(28 126.5)"><path d="M6 4.5L10.5 1L15 4.5V11.5L10.5 14.5L6 11.5" fill="none" stroke="#7a7a7a" stroke-width="1.1"/><path d="M10.5 8L15 4.5M10.5 8V14.5" fill="none" stroke="#7a7a7a" stroke-width="1.1"/><rect x="2" y="3" width="3" height="1.8" fill="#7a7a7a"/><path d="M0 9.5L3.5 14.5L7 9.5H5V6H2V9.5Z" fill="#7a7a7a"/></g><rect x="48" y="125" width="1" height="20" fill="#cccedb"/><g transform="translate(55 126)"><path d="M1.2 10.8L6.5 5.5" stroke="#7a7a7a" stroke-width="2.6" stroke-linecap="round"/><circle cx="8.3" cy="3.6" r="3.4" fill="#7a7a7a"/><path d="M8.6 3.3L11 0.9" stroke="#eeeef2" stroke-width="2.2" stroke-linecap="round"/><g transform="translate(7.5 7)"><circle cx="4.5" cy="4.5" r="4.7" fill="#7a7a7a"/><path d="M0.3 3.4H8.7M0.3 5.6H8.7M3.4 0.3V8.7M5.6 0.3V8.7" stroke="#eeeef2" stroke-width="1"/></g></g><g transform="translate(77 126)"><path d="M0.5 9.5C2 9.5 2 8.5 2.5 6L3.5 1.5C3.8 0.5 4.5 0.3 5.5 0.5M1.8 4H5" fill="none" stroke="#7a7a7a" stroke-width="1"/><path d="M5 3.5H6.5L9.5 8H11M5.5 8L9.5 3.5H10.5" fill="none" stroke="#7a7a7a" stroke-width="0.9"/><g transform="translate(7.5 7)"><circle cx="4.5" cy="4.5" r="4.7" fill="#7a7a7a"/><path d="M0.3 3.4H8.7M0.3 5.6H8.7M3.4 0.3V8.7M5.6 0.3V8.7" stroke="#eeeef2" stroke-width="1"/></g></g><g transform="translate(227 857)"><path d="M3.5 3H7" stroke="#8a8a8a" stroke-width="2"/><path d="M0 3L4 -0.5V6.5Z" fill="#8a8a8a"/><circle cx="9.5" cy="8" r="2.8" fill="none" stroke="#8a8a8a" stroke-width="1.1"/><path d="M7.5 10L4.5 13" stroke="#8a8a8a" stroke-width="1.5"/></g><g transform="translate(249 857)"><path d="M0.5 3H4" stroke="#8a8a8a" stroke-width="2"/><path d="M7.5 3L3.5 -0.5V6.5Z" fill="#8a8a8a"/><circle cx="9.5" cy="8" r="2.8" fill="none" stroke="#8a8a8a" stroke-width="1.1"/><path d="M7.5 10L4.5 13" stroke="#8a8a8a" stroke-width="1.5"/></g><rect x="268" y="854" width="1" height="20" fill="#cccedb"/><g transform="translate(277 857)"><path d="M4.5 2.5V0.5H9.5L11.5 2.5V10.5H8" fill="none" stroke="#333" stroke-width="1.1"/><path d="M0.5 3.5H6L7.5 5V13H0.5Z" fill="#fff" stroke="#333" stroke-width="1.1"/></g><g transform="translate(297 857)"><path d="M1.5 12L12 1M1.5 1L12 12" stroke="#a1260d" stroke-width="2.2"/></g><rect x="318" y="854" width="1" height="20" fill="#cccedb"/><g transform="translate(326 857)"><path d="M0.5 10V0.5H10" fill="none" stroke="#8a8a8a" stroke-width="1"/><path d="M2.5 12V2.5H12" fill="none" stroke="#8a8a8a" stroke-width="1"/><rect x="4.5" y="4.5" width="8" height="8" fill="#fff" stroke="#8a8a8a" stroke-width="1"/><path d="M6 9.5H11" stroke="#8a8a8a" stroke-width="1"/><path d="M8.5 7V12" stroke="#8a8a8a" stroke-width="1"/></g><g transform="translate(348 857)"><path d="M0.5 10V0.5H10" fill="none" stroke="#8a8a8a" stroke-width="1"/><path d="M2.5 12V2.5H12" fill="none" stroke="#8a8a8a" stroke-width="1"/><rect x="4.5" y="4.5" width="8" height="8" fill="#fff" stroke="#8a8a8a" stroke-width="1"/><path d="M6 9.5H11" stroke="#8a8a8a" stroke-width="1"/></g><g transform="translate(7 997)"><g transform="scale(0.95)"><path d="M6.5 2.5V0.5H15.5V9" fill="none" stroke="#333" stroke-width="1"/><path d="M4 4.5V3H13V9" fill="none" stroke="#333" stroke-width="1.3"/><rect x="0.5" y="6.5" width="9.5" height="8.5" fill="#fff" stroke="#333" stroke-width="1"/><rect x="0.5" y="6.5" width="9.5" height="2" fill="#333"/><path d="M1 10.5H9M1 12.5H9M3.5 8.5V15M6.5 8.5V15" stroke="#333" stroke-width="0.9"/><circle cx="11" cy="10.5" r="2.5" fill="#eeeef2" stroke="#333" stroke-width="1.1"/><path d="M12.8 12.3L15 14.5" stroke="#333" stroke-width="1.4"/></g></g><g transform="translate(75 998)"><rect x="0.5" y="0.5" width="13.5" height="13.5" fill="#fff" stroke="#333" stroke-width="1.1"/><rect x="0.5" y="0.5" width="13.5" height="2" fill="#333"/><circle cx="5" cy="6" r="1.8" fill="#d59a30"/><circle cx="9.5" cy="9" r="1.6" fill="#d59a30"/><path d="M6.5 6.5L8.5 8.5M9.5 10.5V13" stroke="#d59a30" stroke-width="1"/></g><g transform="translate(147 998)"><path d="M7.5 0.5C3 0.5 0 3.5 0 7.5C0 11.5 3.5 14 7.5 14C11 14 14 12.5 14 10.5C14 9 12.5 8.5 11 8.5C9 8.5 9 6.5 11 5.5C13.5 4 12.5 0.5 7.5 0.5Z" fill="#333"/><g fill="#fff"><circle cx="6.5" cy="3.5" r="0.9"/><circle cx="3.5" cy="5" r="0.9"/><circle cx="2.5" cy="8" r="0.9"/><circle cx="3.5" cy="11" r="0.9"/><circle cx="6.5" cy="12" r="0.9"/></g></g><g transform="translate(227 998)"><rect x="0.5" y="0.5" width="15" height="13.5" fill="#fff" stroke="#333" stroke-width="1"/><rect x="0.5" y="0.5" width="15" height="2" fill="#333"/><path d="M1 13.5L4.5 5.5L8.5 13.5Z" fill="#f5c518"/><rect x="4" y="8.5" width="1" height="2.5" fill="#333"/><rect x="4" y="11.7" width="1" height="1" fill="#333"/><path d="M9 8L10.5 10.5L14 4.5" fill="none" stroke="#333" stroke-width="1.4"/></g><g transform="translate(433 998)"><path d="M9.5 2.5V0.5H0.5V13.5H9.5V11.5" fill="none" stroke="#333" stroke-width="1.1"/><path d="M3 7H9" stroke="#333" stroke-width="2"/><path d="M8 2.5L13.5 7L8 11.5Z" fill="#333"/></g><g transform="translate(503 998)"><path d="M3 2.5H0.5V13.5H9.5V2.5H7" fill="none" stroke="#333" stroke-width="1.1"/><path d="M3 3.5V2C3 0.5 7 0.5 7 2V3.5Z" fill="none" stroke="#333" stroke-width="1"/><path d="M2.5 8L5 11.5L10 4" fill="none" stroke="#333" stroke-width="1.5"/></g><g transform="translate(655 998)"><path d="M3.5 5V0.5H8L11.5 4V12.5H7" fill="none" stroke="#333" stroke-width="1.1"/><path d="M7.5 0.5V4.5H11.5" fill="none" stroke="#333" stroke-width="1"/><circle cx="5" cy="9" r="2.2" fill="none" stroke="#00539c" stroke-width="1.1"/><path d="M3.5 10.5L0.7 13.3" stroke="#00539c" stroke-width="1.3"/></g><rect x="1660.5" y="162.5" width="8" height="8" fill="#f4f4f4" stroke="#9a9a9a"/><path d="M1662.5 166.5H1666.5M1664.5 164.5V168.5" stroke="#1a3a7a" stroke-width="1.1"/><rect x="1670" y="166" width="1" height="1" fill="#333"/><rect x="1673.5" y="158.5" width="13" height="11" fill="#eee" stroke="#333" stroke-width="1"/><rect x="1673" y="158" width="14" height="2.5" fill="#333"/><g transform="translate(1672 164.3)"><circle cx="4.5" cy="4.5" r="4.7" fill="#333"/><path d="M0.3 3.4H8.7M0.3 5.6H8.7M3.4 0.3V8.7M5.6 0.3V8.7" stroke="#fff" stroke-width="1"/></g><g fill="none" stroke="#333" stroke-width="1"><rect x="1660.5" y="584.5" width="6" height="6" fill="#fff"/><rect x="1660.5" y="593.5" width="6" height="6" fill="#fff"/><path d="M1663.5 590.5V593.5" stroke="#888"/><path d="M1661.8 587.5H1665.2M1663.5 585.8V589.2M1661.8 596.5H1665.2M1663.5 594.8V598.2" stroke="#000"/><path d="M1668 586.5H1672M1668 597.5H1672" stroke="#333"/><path d="M1668 588.5H1674M1668 590.5H1674M1668 592.5H1674M1668 599.5H1674" stroke="#aaa" stroke-dasharray="1 1"/></g><g transform="translate(1683 583)"><text x="0" y="7.5" font-family="Liberation Sans" font-size="8.5" fill="#222">A</text><text x="0.3" y="16" font-family="Liberation Sans" font-size="8.5" fill="#222">Z</text><path d="M10.5 1V2M10.5 3V4M10.5 5V13" stroke="#00007a" stroke-width="1"/><path d="M8 11.5L10.5 15.5L13 11.5Z" fill="#00007a"/></g><g fill="#fff"><path d="M16 1052.5L22.5 1051.6V1059H16Z"/><path d="M23.5 1051.5L32 1050.3V1059H23.5Z"/><path d="M16 1060H22.5V1067.5L16 1066.6Z"/><path d="M23.5 1060H32V1069L23.5 1067.9Z"/></g><g fill="none" stroke="#fff" stroke-width="1.2"><path d="M64.5 1052V1054.5H74.5V1052M64.5 1067V1064.5H74.5V1067M78.5 1052V1054.5M78.5 1060V1067"/><rect x="64.6" y="1056.6" width="9.8" height="6"/></g><rect x="77.3" y="1056" width="2.5" height="2.8" fill="#fff"/><path d="M112 1051.5H119L120.5 1053H134V1068H112Z" fill="#f3cf6a"/><path d="M112 1051.5H119L120.5 1053H134V1055H112Z" fill="#e2b23c"/><path d="M116 1069V1061.5H130V1069H126.5V1064.5H119.5V1069Z" fill="#4a90c8"/><path d="M116 1061.5H130V1063H116Z" fill="#2f6fa8"/><rect x="103" y="1077" width="40" height="3" fill="#76b9ed"/><path d="M160 1048H185V1062Q185 1071 176 1071H160Z" fill="#e04a1a"/><text x="164.5" y="1065" font-family="Liberation Sans" font-weight="bold" font-size="13" fill="#fff">DF</text><rect x="153" y="1077" width="40" height="3" fill="#76b9ed"/><path d="M86.5 534V550L90.5 546.5L93 552.5L95.5 551.5L93 545.5H97.5Z" fill="none" stroke="#000" stroke-width="1"/></svg>
</body></html>
